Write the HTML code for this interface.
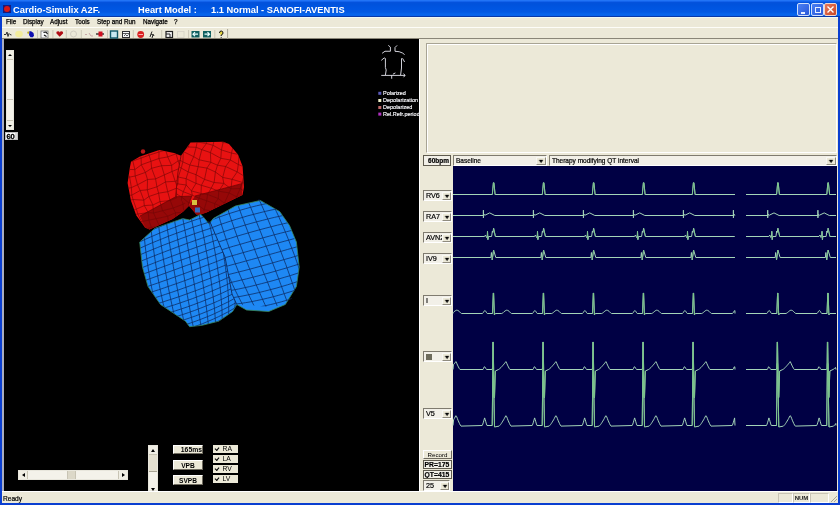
<!DOCTYPE html>
<html><head><meta charset="utf-8">
<style>
*{margin:0;padding:0;box-sizing:border-box}
html,body{width:840px;height:505px;overflow:hidden;background:#0a3ed0;font-family:"Liberation Sans",sans-serif;position:relative}
.a{position:absolute}
#title{left:0;top:0;width:840px;height:17px;background:linear-gradient(#2a7cf8 0px,#1a6cf4 1px,#0452dc 2.5px,#0052dc 4px,#0056e2 9px,#0258e2 12px,#0664ec 14px,#0662ea 15.5px,#0838a8 16.2px,#0838a8 17px)}
.tt{color:#fff;font-weight:bold;font-size:9.3px;top:5px;white-space:nowrap;line-height:10px}
#menu{left:2px;top:17px;width:836px;height:10px;background:#ece9d8;border-top:1px solid #eef8f4}
.mi{font-size:6.3px;top:0px;color:#000;white-space:nowrap;line-height:7px;-webkit-text-stroke:0.25px #000}
#tool{left:2px;top:27px;width:836px;height:12px;background:#ece9d8;border-top:1px solid #fdfdf8;border-bottom:1px solid #8a8678}
.sep{position:absolute;top:2px;width:1px;height:8px;background:#c8c4b4}
#left{left:4px;top:39px;width:415px;height:452px;background:#000}
#strip{left:2px;top:39px;width:2px;height:452px;background:#a8acc0}
#right{left:419px;top:39px;width:419px;height:452px;background:#ece9d8;border-left:1px solid #fff}
#status{left:2px;top:491px;width:836px;height:12px;background:#ece9d8;border-top:1px solid #fff}
#ecg{left:453px;top:166px;width:384px;height:325px;background:#000044}
.cb{background:#f2f0e8;border:1px solid #7f7b6f;border-right-color:#fff;border-bottom-color:#fff;color:#000;white-space:nowrap;overflow:hidden;-webkit-text-stroke:0.2px #000}
.dd{background:#ece9d8;border:1px solid #f8f8f4;border-right-color:#8f8b7f;border-bottom-color:#8f8b7f}
.tri{width:0;height:0;border-left:2.5px solid transparent;border-right:2.5px solid transparent;border-top:3px solid #000;transform:scale(1.1)}
body *{will-change:transform}
.btn{background:#ece9d8;border:1px solid #fff;border-right-color:#6f6b5f;border-bottom-color:#6f6b5f;color:#000;white-space:nowrap;overflow:hidden;text-align:center}
.lg{color:#f4f4fc;font-size:5.5px;line-height:6px;white-space:nowrap;-webkit-text-stroke:0.15px #fff}
.dot{width:2px;height:2px}
.ck{left:213px;width:25px;height:8px;background:#ece9d8;font-size:6.8px;line-height:8px;padding-left:9.5px;color:#000;position:absolute}
.ck::before{content:"";position:absolute;left:1.5px;top:1.5px;width:3px;height:2px;border-left:1px solid #000;border-bottom:1px solid #000;transform:rotate(-50deg)}
</style></head><body>
<div id="title" class="a">
  <div class="a" style="left:3px;top:5px;width:8px;height:8px;background:#1a1a7a"><div class="a" style="left:1px;top:1px;width:6px;height:6px;border-radius:3px;background:#d81818"></div></div>
  <div class="a tt" style="left:13px">Cardio-Simulix A2F.</div>
  <div class="a tt" style="left:138px">Heart Model :</div>
  <div class="a tt" style="left:211px">1.1 Normal - SANOFI-AVENTIS</div>
  <div class="a" style="left:797px;top:3px;width:13px;height:13px;border:1px solid #d0e0fc;border-radius:2px;background:linear-gradient(135deg,#4a80f4,#2a58d8)"><div class="a" style="left:3px;top:8px;width:4px;height:2px;background:#e8f0ff"></div></div>
  <div class="a" style="left:811px;top:3px;width:13px;height:13px;border:1px solid #d0e0fc;border-radius:2px;background:linear-gradient(135deg,#4a80f4,#2a58d8)"><div class="a" style="left:2.5px;top:2.5px;width:6px;height:6px;border:1px solid #e8f0ff;border-top-width:1.5px"></div></div>
  <div class="a" style="left:824px;top:3px;width:13px;height:13px;border:1px solid #f0d8d0;border-radius:2px;background:linear-gradient(135deg,#e87858,#c84828)"><svg class="a" style="left:0;top:0" width="11" height="11"><path d="M2.5,2.5 L8.5,8.5 M8.5,2.5 L2.5,8.5" stroke="#fff" stroke-width="1.4"/></svg></div>
</div>
<div id="menu" class="a">
  <div class="a mi" style="left:4px">File</div>
  <div class="a mi" style="left:21px">Display</div>
  <div class="a mi" style="left:47.5px">Adjust</div>
  <div class="a mi" style="left:73px">Tools</div>
  <div class="a mi" style="left:95px">Step and Run</div>
  <div class="a mi" style="left:140.5px">Navigate</div>
  <div class="a mi" style="left:172px">?</div>
</div>
<div id="tool" class="a">
  <svg class="a" style="left:-2px;top:-27px" width="240" height="40" viewBox="0 0 240 40">
    <path d="M4,33.5 L6,33.5 L7,31 L8,35.5 L9,32.5 L10,33.5 L11.5,34" stroke="#303030" stroke-width="1" fill="none"/>
    <ellipse cx="19" cy="33" rx="3.8" ry="3.2" fill="#f2ec9c"/>
    <circle cx="28.3" cy="31.7" r="1.1" fill="#c0b020"/>
    <path d="M29.5,30 L31.5,30.5 L33.5,32 L34,34.5 L33,36.3 L30.5,36.3 L29,34 Z" fill="#1010b0"/>
    <rect x="41" y="30" width="7" height="7" fill="#f8f8f8" stroke="#707070" stroke-width="0.8"/>
    <path d="M43.5,31.5 L46,31 L47.5,33 M44,34 L46.5,35.5" stroke="#101010" stroke-width="1.1" fill="none"/>
    <path d="M59.7,35.8 L56.3,32.3 Q56,30.2 58,30.2 Q59.5,30.2 59.7,31.5 Q60,30.2 61.5,30.2 Q63.3,30.2 63.2,32.3 Z" fill="#b00c14"/>
    <circle cx="73.5" cy="33" r="3" fill="none" stroke="#d0ccc0" stroke-width="1"/>
    <path d="M85,33.5 L87,33.5 M89,32 L91,35 M92,34 L92,36" stroke="#c8a8a8" stroke-width="1" fill="none"/>
    <path d="M96,33 L104,33" stroke="#101010" stroke-width="1.2"/>
    <rect x="98.5" y="30.5" width="4" height="5" fill="#d01020"/>
    <rect x="110.5" y="30" width="7" height="7" fill="#c8e8f0" stroke="#105868" stroke-width="1.4"/>
    <rect x="122.5" y="30.5" width="7" height="6" fill="#f8f8f8" stroke="#303030" stroke-width="1"/>
    <path d="M123,32.5 L129,32.5 M124,35 L125.5,33.5 L127,35 L128.5,33.5" stroke="#303030" stroke-width="0.8" fill="none"/>
    <circle cx="140.7" cy="33.5" r="3.4" fill="#d82020"/>
    <path d="M138.5,33.5 L143,33.5" stroke="#ffd0d0" stroke-width="0.8"/>
    <path d="M152,30.5 L151,33 L153,34 L152,37 M151,33 L150,36 M153,33 L154,35" stroke="#101010" stroke-width="0.9" fill="none"/>
    <rect x="166" y="30.5" width="6.5" height="6" fill="#f8f8f8" stroke="#202020" stroke-width="1.2"/>
    <path d="M166,33 L170,33 L170,36" stroke="#202020" stroke-width="1" fill="none"/>
    <rect x="177.5" y="30.5" width="6.5" height="6" fill="none" stroke="#d8d4c8" stroke-width="0.9"/>
    <rect x="191.5" y="30" width="8" height="6.5" fill="#106060"/>
    <path d="M193,33.2 L198,33.2 M195,31.2 L193,33.2 L195,35.2" stroke="#e8ffff" stroke-width="1.2" fill="none"/>
    <rect x="203" y="30" width="8" height="6.5" fill="#106060"/>
    <path d="M204.5,33.2 L209.5,33.2 M207.5,31.2 L209.5,33.2 L207.5,35.2" stroke="#e8ffff" stroke-width="1.2" fill="none"/>
    <path d="M219.5,32 Q219.5,30 221.2,30 Q223,30 223,32 Q223,33.5 221.2,34 L221.2,35 M221.2,36 L221.2,36.8" stroke="#101010" stroke-width="1" fill="#e8d840"/>
    <path d="M37.5,29 L37.5,37 M52.9,29 L52.9,37 M66.3,29 L66.3,37 M81.3,29 L81.3,37 M107.5,29 L107.5,37 M133.3,29 L133.3,37 M161.7,29 L161.7,37 M188.6,29 L188.6,37 M214.8,29 L214.8,37" stroke="#cbc7b6" stroke-width="1"/>
    <path d="M227.6,28 L227.6,38" stroke="#a8a494" stroke-width="1"/>
  </svg>
</div>
<div id="strip" class="a"></div>
<div id="left" class="a"></div>
<div id="right" class="a"></div>
<div id="ecg" class="a"></div>

<div class="a" style="left:6px;top:50px;width:8px;height:80px;background:#f4f2ea;border:1px solid #e8e6dc">
  <div class="a" style="left:0;top:0;width:6px;height:9px;background:#f0eee4;border-bottom:1px solid #c8c4b4"><div class="a" style="left:1px;top:3px;width:0;height:0;border-left:2px solid transparent;border-right:2px solid transparent;border-bottom:2.5px solid #000"></div></div>
  <div class="a" style="left:0;top:48px;width:6px;height:1px;background:#c8c4b4"></div>
  <div class="a" style="left:0;top:69px;width:6px;height:9px;background:#f0eee4;border-top:1px solid #c8c4b4"><div class="a" style="left:1px;top:4px;width:0;height:0;border-left:2px solid transparent;border-right:2px solid transparent;border-top:2.5px solid #000"></div></div>
</div>
<div class="a" style="left:5px;top:132px;width:13px;height:8px;background:linear-gradient(90deg,#fff 9px,#d8d8d8 9px,#d8d8d8 12px,#fff 12px);border:0.5px solid #c0c0c0;font-size:7.6px;line-height:8px;font-weight:bold;color:#000;padding-left:0.5px;-webkit-text-stroke:0.3px #000;letter-spacing:-0.3px">60</div>
<svg class="a" style="left:0;top:0" width="420" height="130" viewBox="0 0 420 130">
  <g stroke="#e8e8f0" stroke-width="0.9" fill="none">
    <path d="M388.3,45.4 L390.4,47.1 L390.4,51.25 L385,51.25 L382.1,53.3"/>
    <path d="M397.1,45.4 L395,47.5 L395,51.3 L399.2,51.7 L402.5,53 L404.6,54.6"/>
    <path d="M381.25,60.4 L384.2,57.9 L385.4,58.5 L385.4,67.5 L386.2,70 L385.4,75"/>
    <path d="M402.5,58.3 L404.6,62 M401.5,58.3 L401.5,68 L400.6,75"/>
    <path d="M381.25,75.4 L405,75.4 M403.6,73.6 L405,75.4 L403.6,77.2 M391.7,75.4 L391.7,78.75 M392.9,74.2 L395.4,72.9"/>
  </g>
  <rect x="378.3" y="91.8" width="3" height="3" fill="#5a5ab8"/>
  <rect x="378.3" y="99" width="3" height="3" fill="#f0f0c8"/>
  <rect x="378.3" y="106" width="3" height="3" fill="#c06868"/>
  <rect x="378.3" y="112.6" width="3" height="3" fill="#b030c0"/>
</svg>
<div class="a lg" style="left:382.5px;top:90px">Polarized</div>
<div class="a lg" style="left:382.5px;top:97px">Depolarization</div>
<div class="a lg" style="left:382.5px;top:104px">Depolarized</div>
<div class="a" style="left:382.5px;top:111px;width:36.5px;overflow:hidden"><div class="lg">Rel.Refr.period</div></div>

<div class="a" style="left:18px;top:470px;width:110px;height:10px;background:#f4f2ea;border:1px solid #e8e6dc">
  <div class="a" style="left:0;top:0;width:9px;height:8px;background:#f0eee4;border-right:1px solid #c8c4b4"><div class="a" style="left:3px;top:1.5px;width:0;height:0;border-top:2.5px solid transparent;border-bottom:2.5px solid transparent;border-right:3px solid #000"></div></div>
  <div class="a" style="left:48px;top:0;width:9px;height:8px;background:#dcd8c8;border-left:1px solid #c8c4b4;border-right:1px solid #c8c4b4"></div>
  <div class="a" style="right:0;top:0;width:9px;height:8px;background:#f0eee4;border-left:1px solid #c8c4b4"><div class="a" style="left:3px;top:1.5px;width:0;height:0;border-top:2.5px solid transparent;border-bottom:2.5px solid transparent;border-left:3px solid #000"></div></div>
</div>
<div class="a" style="left:148px;top:445px;width:10px;height:46px;background:#f4f2ea;border:1px solid #e8e6dc">
  <div class="a" style="left:0;top:0;width:8px;height:9px;background:#f0eee4;border-bottom:1px solid #c8c4b4"><div class="a" style="left:1.5px;top:3px;width:0;height:0;border-left:2.5px solid transparent;border-right:2.5px solid transparent;border-bottom:3px solid #000"></div></div>
  <div class="a" style="left:0;top:9px;width:8px;height:17px;background:#e4e0d0;border-bottom:1px solid #a8a494"></div>
  <div class="a" style="left:1.5px;top:42px;width:0;height:0;border-left:2.5px solid transparent;border-right:2.5px solid transparent;border-top:3px solid #000"></div>
</div>
<div class="a btn" style="left:173px;top:445px;width:30px;height:9px;font-size:6.8px;line-height:8px;font-weight:bold;text-align:right;padding-right:0">165ms</div>
<div class="a btn" style="left:173px;top:460px;width:30px;height:10px;font-size:6.6px;line-height:9px;font-weight:bold">VPB</div>
<div class="a btn" style="left:173px;top:475px;width:30px;height:10px;font-size:6.6px;line-height:9px;font-weight:bold">SVPB</div>
<div class="a ck" style="top:445px">RA</div>
<div class="a ck" style="top:455px">LA</div>
<div class="a ck" style="top:465px">RV</div>
<div class="a ck" style="top:475px">LV</div>
<svg class="a" style="left:0;top:0" width="840" height="505" viewBox="0 0 840 505">
<defs><clipPath id="cb"><polygon points="200.7,214.4 189.6,220.0 182.7,218.6 155.0,228.3 139.7,242.1 142.5,267.1 148.0,286.5 160.5,304.5 185.5,321.2 189.6,326.7 202.0,325.3 218.7,321.2 232.6,311.5 236.8,304.5 246.5,310.0 268.7,311.5 285.3,304.5 296.4,286.5 299.2,267.1 296.4,242.1 289.5,225.5 279.7,211.6 260.3,200.5 235.4,206.0 213.2,218.6 209.0,224.1 203.5,217.2"/></clipPath><clipPath id="clv"><polygon points="200.7,214.4 189.6,220.0 182.7,218.6 155.0,228.3 139.7,242.1 142.5,267.1 148.0,286.5 160.5,304.5 185.5,321.2 189.6,326.7 202.0,325.3 218.7,321.2 232.6,311.5 236.8,304.5 232.0,294.0 225.0,257.0 210.0,222.0 203.5,217.2"/></clipPath><clipPath id="crv"><polygon points="210.0,222.0 225.0,211.0 259.0,199.0 279.7,211.6 289.5,225.5 296.4,244.5 299.2,267.1 296.4,286.5 291.6,299.0 274.0,307.6 249.5,305.0 236.8,304.5 232.0,294.0 225.0,257.0"/></clipPath><clipPath id="crl"><polygon points="110,130 183,130 181,155.7 178,172 175.6,196.8 189,205.7 172.6,219.1 110,250"/></clipPath><clipPath id="crr"><polygon points="183,130 260,130 260,230 189,205.7 175.6,196.8 178,172 181,155.7"/></clipPath><clipPath id="cr"><polygon points="131.0,161.8 139.9,156.6 159.2,149.9 174.1,152.9 181.0,155.7 190.5,142.5 223.2,141.7 229.0,144.0 238.0,154.4 242.6,166.3 244.0,187.0 242.5,195.0 222.4,204.7 207.0,212.3 200.6,214.5 196.4,214.6 189.0,205.7 183.0,211.7 172.6,219.1 149.5,229.5 145.0,227.6 136.3,215.6 130.9,200.4 127.6,183.0 129.8,167.7"/></clipPath></defs>
<polygon points="131.0,161.8 139.9,156.6 159.2,149.9 174.1,152.9 181.0,155.7 190.5,142.5 223.2,141.7 229.0,144.0 238.0,154.4 242.6,166.3 244.0,187.0 242.5,195.0 222.4,204.7 207.0,212.3 200.6,214.5 196.4,214.6 189.0,205.7 183.0,211.7 172.6,219.1 149.5,229.5 145.0,227.6 136.3,215.6 130.9,200.4 127.6,183.0 129.8,167.7" fill="#e81212"/>
<polygon points="139.9,216.1 175.6,196.8 192.0,196.0 189.0,205.7 183.0,211.7 172.6,219.1 149.5,229.5 145.0,227.6" fill="#960808"/><polygon points="195.0,196.0 242.6,183.4 242.0,195.0 222.4,204.7 207.0,212.3 200.6,214.5 196.4,214.6 189.0,205.7" fill="#960808"/>
<g clip-path="url(#cr)"><path d="M111.8,157.9 L115.3,154.5 L120.3,148.9 L123.3,148.0 L130.2,142.4 L139.5,140.0 L146.2,137.1 L153.1,133.4 L160.7,133.8 L167.9,131.7 L175.8,128.1 L182.9,129.5 L187.5,127.6 L194.8,129.9 L198.7,132.8 M112.4,163.7 L114.5,159.8 L119.2,156.8 L126.3,150.4 L130.0,147.4 L140.1,145.0 L146.5,141.5 L154.0,139.2 L161.4,137.6 L170.2,136.9 L178.2,135.7 L185.9,135.1 L191.7,131.9 L197.9,135.2 L202.6,134.7 M111.7,166.3 L115.7,164.4 L118.6,159.3 L126.5,159.3 L130.4,155.4 L139.0,149.8 L146.6,149.1 L156.9,143.7 L164.3,141.3 L172.9,140.4 L181.4,141.1 L187.4,140.1 L193.3,136.3 L200.0,136.1 L203.3,138.1 M111.1,171.8 L113.0,171.5 L119.1,168.7 L127.3,163.5 L132.8,160.9 L141.1,158.1 L149.1,155.2 L159.0,152.0 L165.7,150.2 L173.5,146.5 L184.2,145.5 L190.2,142.4 L196.5,143.5 L200.9,143.3 L207.9,141.5 M111.5,179.0 L115.8,176.1 L121.3,174.7 L125.2,169.3 L134.8,169.6 L141.3,164.8 L151.0,161.3 L158.9,158.5 L167.7,156.9 L176.1,153.8 L186.0,150.5 L193.0,151.4 L198.9,148.4 L206.6,147.7 L209.2,148.2 M112.5,184.2 L115.6,182.8 L123.0,180.7 L129.6,177.1 L135.2,176.0 L145.4,172.4 L151.6,168.3 L161.6,165.7 L171.6,165.4 L178.1,160.9 L188.6,160.0 L196.4,157.0 L200.9,155.3 L209.2,154.1 L212.4,154.0 M112.8,191.9 L119.1,189.1 L121.5,189.8 L131.4,187.6 L137.5,184.8 L147.5,179.5 L155.6,178.9 L164.3,174.9 L172.0,171.5 L180.6,167.9 L190.3,166.3 L198.8,163.3 L206.1,163.8 L212.0,163.1 L216.7,160.9 M112.9,199.8 L118.2,196.7 L125.8,195.7 L131.8,195.1 L140.2,190.5 L147.3,189.8 L156.9,186.8 L165.5,181.9 L175.2,181.3 L182.7,178.5 L193.7,176.0 L201.1,170.7 L207.2,171.7 L211.0,167.8 L216.5,167.2 M116.4,205.3 L122.5,202.6 L125.8,201.6 L133.0,199.5 L143.8,200.2 L148.9,196.5 L158.6,193.2 L167.7,191.7 L177.6,187.8 L184.9,184.9 L193.0,183.0 L202.7,179.7 L207.2,176.6 L213.9,176.0 L220.0,173.3 M120.2,212.1 L123.6,210.6 L129.8,210.7 L136.4,209.1 L144.3,205.6 L152.9,205.0 L160.0,201.6 L170.2,200.5 L181.0,195.9 L189.5,194.5 L195.3,190.4 L202.3,188.9 L210.8,186.5 L216.9,183.2 L221.0,180.6 M120.3,217.9 L124.7,216.1 L133.4,215.0 L137.8,214.0 L148.3,212.6 L153.5,213.0 L162.5,210.7 L173.2,208.0 L183.0,204.3 L190.9,199.4 L198.8,198.1 L205.8,193.7 L212.4,193.7 L215.2,188.8 L221.2,188.0 M123.6,221.7 L128.4,223.5 L136.1,222.4 L141.5,221.5 L148.9,220.2 L156.1,218.7 L167.7,216.2 L175.5,212.8 L183.8,212.2 L192.0,208.3 L199.0,205.7 L207.6,200.8 L210.8,199.8 L218.9,195.9 L221.1,193.8 M126.5,226.7 L131.2,228.5 L137.4,227.3 L145.3,229.3 L151.3,227.3 L159.6,226.3 L168.4,222.2 L175.4,218.9 L184.6,217.5 L191.5,214.4 L199.4,212.7 L205.5,210.2 L212.6,205.5 L217.3,203.1 L222.3,198.9 M130.8,232.3 L136.7,232.2 L141.8,234.6 L147.2,231.7 L153.5,232.7 L162.7,232.2 L171.3,227.8 L176.9,225.6 L184.9,224.5 L194.9,222.2 L199.8,218.9 L206.4,213.9 L213.4,209.2 L215.6,208.4 L219.7,203.3 M134.4,235.2 L136.7,235.4 L143.6,236.6 L149.0,237.1 L158.5,235.9 L164.3,233.8 L170.9,234.1 L178.0,232.8 L188.5,227.4 L195.8,225.4 L201.9,223.6 L206.2,219.8 L212.7,216.7 L215.4,212.8 L220.9,208.9 M111.8,157.9 L112.4,163.7 L111.7,166.3 L111.1,171.8 L111.5,179.0 L112.5,184.2 L112.8,191.9 L112.9,199.8 L116.4,205.3 L120.2,212.1 L120.3,217.9 L123.6,221.7 L126.5,226.7 L130.8,232.3 L134.4,235.2 M115.3,154.5 L114.5,159.8 L115.7,164.4 L113.0,171.5 L115.8,176.1 L115.6,182.8 L119.1,189.1 L118.2,196.7 L122.5,202.6 L123.6,210.6 L124.7,216.1 L128.4,223.5 L131.2,228.5 L136.7,232.2 L136.7,235.4 M120.3,148.9 L119.2,156.8 L118.6,159.3 L119.1,168.7 L121.3,174.7 L123.0,180.7 L121.5,189.8 L125.8,195.7 L125.8,201.6 L129.8,210.7 L133.4,215.0 L136.1,222.4 L137.4,227.3 L141.8,234.6 L143.6,236.6 M123.3,148.0 L126.3,150.4 L126.5,159.3 L127.3,163.5 L125.2,169.3 L129.6,177.1 L131.4,187.6 L131.8,195.1 L133.0,199.5 L136.4,209.1 L137.8,214.0 L141.5,221.5 L145.3,229.3 L147.2,231.7 L149.0,237.1 M130.2,142.4 L130.0,147.4 L130.4,155.4 L132.8,160.9 L134.8,169.6 L135.2,176.0 L137.5,184.8 L140.2,190.5 L143.8,200.2 L144.3,205.6 L148.3,212.6 L148.9,220.2 L151.3,227.3 L153.5,232.7 L158.5,235.9 M139.5,140.0 L140.1,145.0 L139.0,149.8 L141.1,158.1 L141.3,164.8 L145.4,172.4 L147.5,179.5 L147.3,189.8 L148.9,196.5 L152.9,205.0 L153.5,213.0 L156.1,218.7 L159.6,226.3 L162.7,232.2 L164.3,233.8 M146.2,137.1 L146.5,141.5 L146.6,149.1 L149.1,155.2 L151.0,161.3 L151.6,168.3 L155.6,178.9 L156.9,186.8 L158.6,193.2 L160.0,201.6 L162.5,210.7 L167.7,216.2 L168.4,222.2 L171.3,227.8 L170.9,234.1 M153.1,133.4 L154.0,139.2 L156.9,143.7 L159.0,152.0 L158.9,158.5 L161.6,165.7 L164.3,174.9 L165.5,181.9 L167.7,191.7 L170.2,200.5 L173.2,208.0 L175.5,212.8 L175.4,218.9 L176.9,225.6 L178.0,232.8 M160.7,133.8 L161.4,137.6 L164.3,141.3 L165.7,150.2 L167.7,156.9 L171.6,165.4 L172.0,171.5 L175.2,181.3 L177.6,187.8 L181.0,195.9 L183.0,204.3 L183.8,212.2 L184.6,217.5 L184.9,224.5 L188.5,227.4 M167.9,131.7 L170.2,136.9 L172.9,140.4 L173.5,146.5 L176.1,153.8 L178.1,160.9 L180.6,167.9 L182.7,178.5 L184.9,184.9 L189.5,194.5 L190.9,199.4 L192.0,208.3 L191.5,214.4 L194.9,222.2 L195.8,225.4 M175.8,128.1 L178.2,135.7 L181.4,141.1 L184.2,145.5 L186.0,150.5 L188.6,160.0 L190.3,166.3 L193.7,176.0 L193.0,183.0 L195.3,190.4 L198.8,198.1 L199.0,205.7 L199.4,212.7 L199.8,218.9 L201.9,223.6 M182.9,129.5 L185.9,135.1 L187.4,140.1 L190.2,142.4 L193.0,151.4 L196.4,157.0 L198.8,163.3 L201.1,170.7 L202.7,179.7 L202.3,188.9 L205.8,193.7 L207.6,200.8 L205.5,210.2 L206.4,213.9 L206.2,219.8 M187.5,127.6 L191.7,131.9 L193.3,136.3 L196.5,143.5 L198.9,148.4 L200.9,155.3 L206.1,163.8 L207.2,171.7 L207.2,176.6 L210.8,186.5 L212.4,193.7 L210.8,199.8 L212.6,205.5 L213.4,209.2 L212.7,216.7 M194.8,129.9 L197.9,135.2 L200.0,136.1 L200.9,143.3 L206.6,147.7 L209.2,154.1 L212.0,163.1 L211.0,167.8 L213.9,176.0 L216.9,183.2 L215.2,188.8 L218.9,195.9 L217.3,203.1 L215.6,208.4 L215.4,212.8 M198.7,132.8 L202.6,134.7 L203.3,138.1 L207.9,141.5 L209.2,148.2 L212.4,154.0 L216.7,160.9 L216.5,167.2 L220.0,173.3 L221.0,180.6 L221.2,188.0 L221.1,193.8 L222.3,198.9 L219.7,203.3 L220.9,208.9" stroke="#700606" stroke-width="0.6" fill="none" clip-path="url(#crl)"/><path d="M186.5,110.1 L192.0,108.7 L196.9,109.2 L201.3,109.9 L207.9,110.5 L215.2,110.7 L224.0,115.4 L230.5,115.7 L239.7,121.3 L246.7,122.6 L254.7,124.9 L260.2,129.6 L262.6,132.8 L267.3,139.3 L269.7,142.2 M184.4,113.9 L188.5,112.0 L192.3,112.4 L200.8,113.7 L206.5,115.4 L214.5,116.0 L223.6,119.7 L229.5,121.9 L238.3,126.1 L246.5,127.3 L254.4,130.3 L258.6,136.3 L263.1,139.1 L267.1,143.5 L272.9,146.8 M182.0,117.5 L186.0,118.1 L191.2,117.9 L198.7,120.5 L204.6,120.9 L210.9,123.0 L221.1,126.4 L229.9,126.7 L236.5,131.2 L243.0,133.9 L250.8,136.2 L257.0,142.1 L263.0,143.9 L268.6,149.7 L271.1,151.5 M177.8,124.2 L183.4,124.1 L187.3,123.1 L194.2,126.0 L203.8,125.1 L208.9,127.5 L217.5,131.0 L227.2,133.2 L233.5,137.0 L242.9,140.9 L252.6,144.8 L257.9,148.1 L264.5,149.5 L270.3,155.4 L274.0,158.6 M174.3,127.7 L178.0,129.0 L183.7,127.9 L191.0,129.8 L199.0,131.4 L205.9,134.1 L214.7,137.7 L223.1,142.6 L233.8,143.2 L240.8,147.3 L249.1,149.9 L258.0,156.4 L262.9,157.8 L266.7,159.4 L271.7,162.8 M173.2,132.6 L175.0,136.3 L182.7,134.8 L189.6,136.2 L197.1,141.9 L206.5,143.5 L213.0,145.3 L221.4,149.9 L231.5,153.1 L239.2,154.5 L249.0,160.5 L256.5,163.0 L262.8,165.8 L266.2,167.8 L270.9,168.4 M167.9,139.3 L173.4,142.0 L181.8,142.9 L188.5,147.0 L196.2,147.3 L201.8,149.6 L210.4,152.6 L220.8,158.3 L230.4,160.0 L238.3,164.5 L244.4,167.1 L254.9,170.5 L261.0,172.2 L264.5,175.7 L269.5,177.9 M169.3,146.2 L171.8,149.9 L178.7,149.2 L183.3,151.6 L193.7,156.7 L199.2,159.8 L210.8,162.3 L217.5,165.2 L225.6,166.5 L237.2,171.9 L243.9,176.0 L251.1,178.5 L259.3,178.6 L263.0,181.0 L267.5,183.7 M165.0,152.9 L169.0,156.8 L175.4,157.6 L182.9,161.9 L189.8,165.0 L198.2,166.7 L206.9,168.1 L215.4,172.0 L222.7,177.4 L232.0,179.3 L242.3,182.4 L248.4,184.8 L256.1,187.9 L260.3,188.9 L265.5,189.1 M165.5,159.9 L169.1,163.2 L175.8,164.8 L181.2,168.1 L188.2,171.9 L196.0,174.7 L204.5,179.4 L214.1,182.5 L223.8,183.4 L231.0,188.8 L240.2,188.5 L245.2,191.9 L251.9,193.0 L257.7,195.9 L265.0,197.6 M162.5,167.1 L168.4,167.8 L174.4,173.8 L178.3,177.0 L186.1,178.7 L196.0,183.4 L201.4,185.3 L211.2,188.2 L218.7,191.2 L229.1,192.9 L236.6,196.8 L242.2,198.4 L251.2,200.6 L255.0,203.3 L262.3,203.7 M161.9,171.7 L165.5,176.6 L171.3,177.6 L177.9,183.9 L186.2,185.0 L191.4,190.9 L201.0,193.5 L207.6,194.4 L218.3,198.6 L224.4,203.1 L234.3,204.8 L239.8,206.7 L246.4,207.9 L253.5,206.6 L258.6,208.8 M162.6,176.9 L167.1,180.7 L170.3,184.0 L175.8,187.7 L183.3,191.7 L192.3,195.2 L199.1,198.2 L206.7,200.8 L214.6,203.6 L224.4,207.9 L230.2,209.6 L240.1,209.7 L246.2,211.7 L250.7,213.4 L255.0,211.8 M164.7,185.2 L166.7,188.3 L172.4,191.3 L176.7,194.1 L181.7,197.0 L188.7,202.8 L196.9,204.1 L204.1,209.6 L214.8,211.6 L220.5,212.3 L228.1,214.8 L234.6,215.9 L241.3,218.2 L249.3,216.6 L251.2,217.3 M164.5,187.5 L166.3,191.5 L172.0,195.8 L176.0,199.7 L181.2,202.6 L188.1,206.6 L195.1,208.6 L203.5,212.3 L212.0,215.9 L220.1,218.4 L227.2,220.6 L232.7,219.5 L241.0,219.0 L245.3,220.3 L247.2,219.8 M186.5,110.1 L184.4,113.9 L182.0,117.5 L177.8,124.2 L174.3,127.7 L173.2,132.6 L167.9,139.3 L169.3,146.2 L165.0,152.9 L165.5,159.9 L162.5,167.1 L161.9,171.7 L162.6,176.9 L164.7,185.2 L164.5,187.5 M192.0,108.7 L188.5,112.0 L186.0,118.1 L183.4,124.1 L178.0,129.0 L175.0,136.3 L173.4,142.0 L171.8,149.9 L169.0,156.8 L169.1,163.2 L168.4,167.8 L165.5,176.6 L167.1,180.7 L166.7,188.3 L166.3,191.5 M196.9,109.2 L192.3,112.4 L191.2,117.9 L187.3,123.1 L183.7,127.9 L182.7,134.8 L181.8,142.9 L178.7,149.2 L175.4,157.6 L175.8,164.8 L174.4,173.8 L171.3,177.6 L170.3,184.0 L172.4,191.3 L172.0,195.8 M201.3,109.9 L200.8,113.7 L198.7,120.5 L194.2,126.0 L191.0,129.8 L189.6,136.2 L188.5,147.0 L183.3,151.6 L182.9,161.9 L181.2,168.1 L178.3,177.0 L177.9,183.9 L175.8,187.7 L176.7,194.1 L176.0,199.7 M207.9,110.5 L206.5,115.4 L204.6,120.9 L203.8,125.1 L199.0,131.4 L197.1,141.9 L196.2,147.3 L193.7,156.7 L189.8,165.0 L188.2,171.9 L186.1,178.7 L186.2,185.0 L183.3,191.7 L181.7,197.0 L181.2,202.6 M215.2,110.7 L214.5,116.0 L210.9,123.0 L208.9,127.5 L205.9,134.1 L206.5,143.5 L201.8,149.6 L199.2,159.8 L198.2,166.7 L196.0,174.7 L196.0,183.4 L191.4,190.9 L192.3,195.2 L188.7,202.8 L188.1,206.6 M224.0,115.4 L223.6,119.7 L221.1,126.4 L217.5,131.0 L214.7,137.7 L213.0,145.3 L210.4,152.6 L210.8,162.3 L206.9,168.1 L204.5,179.4 L201.4,185.3 L201.0,193.5 L199.1,198.2 L196.9,204.1 L195.1,208.6 M230.5,115.7 L229.5,121.9 L229.9,126.7 L227.2,133.2 L223.1,142.6 L221.4,149.9 L220.8,158.3 L217.5,165.2 L215.4,172.0 L214.1,182.5 L211.2,188.2 L207.6,194.4 L206.7,200.8 L204.1,209.6 L203.5,212.3 M239.7,121.3 L238.3,126.1 L236.5,131.2 L233.5,137.0 L233.8,143.2 L231.5,153.1 L230.4,160.0 L225.6,166.5 L222.7,177.4 L223.8,183.4 L218.7,191.2 L218.3,198.6 L214.6,203.6 L214.8,211.6 L212.0,215.9 M246.7,122.6 L246.5,127.3 L243.0,133.9 L242.9,140.9 L240.8,147.3 L239.2,154.5 L238.3,164.5 L237.2,171.9 L232.0,179.3 L231.0,188.8 L229.1,192.9 L224.4,203.1 L224.4,207.9 L220.5,212.3 L220.1,218.4 M254.7,124.9 L254.4,130.3 L250.8,136.2 L252.6,144.8 L249.1,149.9 L249.0,160.5 L244.4,167.1 L243.9,176.0 L242.3,182.4 L240.2,188.5 L236.6,196.8 L234.3,204.8 L230.2,209.6 L228.1,214.8 L227.2,220.6 M260.2,129.6 L258.6,136.3 L257.0,142.1 L257.9,148.1 L258.0,156.4 L256.5,163.0 L254.9,170.5 L251.1,178.5 L248.4,184.8 L245.2,191.9 L242.2,198.4 L239.8,206.7 L240.1,209.7 L234.6,215.9 L232.7,219.5 M262.6,132.8 L263.1,139.1 L263.0,143.9 L264.5,149.5 L262.9,157.8 L262.8,165.8 L261.0,172.2 L259.3,178.6 L256.1,187.9 L251.9,193.0 L251.2,200.6 L246.4,207.9 L246.2,211.7 L241.3,218.2 L241.0,219.0 M267.3,139.3 L267.1,143.5 L268.6,149.7 L270.3,155.4 L266.7,159.4 L266.2,167.8 L264.5,175.7 L263.0,181.0 L260.3,188.9 L257.7,195.9 L255.0,203.3 L253.5,206.6 L250.7,213.4 L249.3,216.6 L245.3,220.3 M269.7,142.2 L272.9,146.8 L271.1,151.5 L274.0,158.6 L271.7,162.8 L270.9,168.4 L269.5,177.9 L267.5,183.7 L265.5,189.1 L265.0,197.6 L262.3,203.7 L258.6,208.8 L255.0,211.8 L251.2,217.3 L247.2,219.8" stroke="#700606" stroke-width="0.6" fill="none" clip-path="url(#crr)"/><path d="M140,216 L175.6,196.8 L192,196 M195,196 L242.6,183.4" stroke="#6a0404" stroke-width="0.7" fill="none"/></g>
<path d="M181,155.7 L178,172 L175.6,196.8" stroke="#700404" stroke-width="0.8" fill="none"/><circle cx="143" cy="151.5" r="2.2" fill="#b81818"/>
<rect x="192" y="200" width="5" height="5" fill="#d8c040"/>
<rect x="195" y="207.5" width="5" height="5" fill="#3a68b8"/>
<polygon points="200.7,214.4 189.6,220.0 182.7,218.6 155.0,228.3 139.7,242.1 142.5,267.1 148.0,286.5 160.5,304.5 185.5,321.2 189.6,326.7 202.0,325.3 218.7,321.2 232.6,311.5 236.8,304.5 246.5,310.0 268.7,311.5 285.3,304.5 296.4,286.5 299.2,267.1 296.4,242.1 289.5,225.5 279.7,211.6 260.3,200.5 235.4,206.0 213.2,218.6 209.0,224.1 203.5,217.2" fill="#1e88f4" stroke="#3a8a5a" stroke-width="0.8"/>
<path d="M114.9,231.8 L115.9,229.7 L117.1,227.5 L118.3,225.2 L119.7,222.8 L121.2,220.2 L122.9,217.6 L124.8,214.8 L126.9,211.9 L129.3,209.0 L132.0,206.1 L135.0,203.2 L138.3,200.4 L141.9,197.7 L145.7,195.0 L149.7,192.5 L154.0,190.1 L158.4,187.8 L162.9,185.6 L167.5,183.6 L172.2,181.8 L176.9,180.2 L181.6,178.8 L186.3,177.6 L190.9,176.6 L195.4,175.8 L199.8,175.3 L204.0,175.0 L208.1,174.9 L211.9,175.1 L215.5,175.6 L218.8,176.3 L221.8,177.3 L224.6,178.4 L227.2,179.5 L229.5,180.7 L231.7,181.9 L233.7,183.0 L235.6,184.2 L237.3,185.4 L238.9,186.6 M113.7,234.5 L114.6,232.4 L115.7,230.2 L116.9,227.9 L118.2,225.4 L119.6,222.8 L121.3,220.1 L123.1,217.3 L125.3,214.4 L127.8,211.5 L130.6,208.6 L133.8,205.7 L137.3,202.9 L141.0,200.2 L145.0,197.5 L149.2,195.0 L153.6,192.5 L158.2,190.2 L162.9,188.0 L167.7,186.0 L172.6,184.1 L177.5,182.4 L182.3,180.9 L187.2,179.6 L192.0,178.5 L196.7,177.7 L201.2,177.0 L205.6,176.6 L209.8,176.4 L213.8,176.5 L217.5,176.9 L220.9,177.4 L224.1,178.3 L226.9,179.4 L229.5,180.6 L231.8,181.9 L233.9,183.2 L235.9,184.4 L237.7,185.7 L239.3,186.9 L240.8,188.1 M112.5,237.4 L113.3,235.3 L114.3,233.1 L115.4,230.8 L116.6,228.3 L118.0,225.7 L119.6,222.9 L121.5,220.1 L123.7,217.2 L126.4,214.4 L129.4,211.5 L132.7,208.7 L136.4,205.9 L140.3,203.2 L144.4,200.5 L148.8,198.0 L153.4,195.5 L158.2,193.1 L163.0,190.9 L168.0,188.8 L173.0,186.9 L178.1,185.1 L183.2,183.6 L188.2,182.2 L193.1,181.0 L198.0,180.0 L202.7,179.3 L207.2,178.8 L211.6,178.5 L215.7,178.4 L219.5,178.6 L223.1,179.1 L226.4,179.8 L229.3,180.7 L231.9,182.0 L234.2,183.3 L236.2,184.7 L238.1,186.0 L239.8,187.3 L241.4,188.6 L242.8,189.8 M111.3,240.5 L112.1,238.4 L112.9,236.3 L113.9,233.9 L115.1,231.5 L116.4,228.8 L118.0,226.1 L120.0,223.3 L122.4,220.5 L125.2,217.7 L128.3,214.9 L131.8,212.1 L135.6,209.4 L139.7,206.7 L144.0,204.0 L148.6,201.5 L153.3,199.0 L158.2,196.6 L163.3,194.3 L168.4,192.2 L173.6,190.2 L178.8,188.4 L184.1,186.7 L189.2,185.3 L194.4,184.0 L199.3,182.9 L204.2,182.1 L208.9,181.4 L213.3,181.0 L217.6,180.8 L221.5,180.9 L225.2,181.2 L228.6,181.8 L231.6,182.6 L234.3,183.6 L236.6,184.9 L238.6,186.4 L240.4,187.8 L242.0,189.1 L243.5,190.4 L244.9,191.7 M110.2,243.7 L110.8,241.7 L111.6,239.6 L112.5,237.3 L113.5,234.9 L114.8,232.3 L116.6,229.7 L118.7,227.0 L121.3,224.3 L124.2,221.5 L127.5,218.8 L131.1,216.0 L135.0,213.3 L139.3,210.6 L143.7,208.0 L148.4,205.4 L153.4,202.9 L158.4,200.5 L163.6,198.2 L168.9,196.0 L174.3,194.0 L179.7,192.1 L185.0,190.4 L190.4,188.8 L195.6,187.5 L200.7,186.3 L205.7,185.3 L210.5,184.6 L215.1,184.1 L219.5,183.8 L223.6,183.7 L227.4,183.9 L230.8,184.3 L233.9,184.9 L236.7,185.8 L239.1,186.9 L241.1,188.3 L242.8,189.8 L244.3,191.2 L245.7,192.5 L246.9,193.8 M109.1,247.1 L109.7,245.2 L110.3,243.2 L111.1,240.9 L112.1,238.6 L113.5,236.1 L115.4,233.6 L117.6,231.0 L120.3,228.3 L123.4,225.7 L126.8,223.0 L130.5,220.3 L134.6,217.6 L139.0,215.0 L143.6,212.3 L148.5,209.8 L153.5,207.3 L158.7,204.9 L164.1,202.6 L169.5,200.3 L175.0,198.3 L180.5,196.3 L186.0,194.5 L191.5,192.9 L196.9,191.4 L202.2,190.2 L207.3,189.1 L212.2,188.2 L216.9,187.6 L221.4,187.1 L225.6,186.9 L229.4,186.9 L233.0,187.2 L236.2,187.7 L239.0,188.4 L241.5,189.4 L243.5,190.6 L245.2,192.0 L246.6,193.4 L247.8,194.8 L249.0,196.1 M108.1,250.7 L108.6,248.9 L109.1,246.9 L109.8,244.8 L110.9,242.6 L112.4,240.2 L114.4,237.8 L116.7,235.3 L119.5,232.8 L122.7,230.2 L126.2,227.6 L130.1,224.9 L134.3,222.3 L138.8,219.7 L143.6,217.1 L148.6,214.6 L153.8,212.1 L159.1,209.6 L164.6,207.3 L170.2,205.1 L175.8,203.0 L181.5,201.0 L187.1,199.1 L192.7,197.4 L198.2,195.8 L203.6,194.5 L208.8,193.3 L213.9,192.3 L218.7,191.5 L223.2,191.0 L227.5,190.6 L231.5,190.5 L235.1,190.6 L238.4,190.9 L241.3,191.5 L243.8,192.2 L245.9,193.3 L247.6,194.5 L248.9,195.9 L250.0,197.3 L251.0,198.6 M107.2,254.5 L107.6,252.8 L108.0,251.0 L108.7,248.9 L109.9,246.8 L111.5,244.6 L113.6,242.3 L116.0,240.0 L118.9,237.5 L122.2,235.0 L125.9,232.5 L129.9,229.9 L134.2,227.4 L138.8,224.8 L143.7,222.2 L148.8,219.7 L154.2,217.2 L159.6,214.8 L165.2,212.5 L170.9,210.2 L176.7,208.0 L182.5,206.0 L188.2,204.1 L193.9,202.3 L199.5,200.7 L205.0,199.2 L210.4,197.9 L215.5,196.8 L220.4,195.9 L225.1,195.2 L229.4,194.7 L233.5,194.4 L237.2,194.4 L240.5,194.5 L243.5,194.9 L246.0,195.5 L248.2,196.4 L249.9,197.4 L251.1,198.7 L252.2,200.0 L253.1,201.3 M106.4,258.5 L106.7,256.9 L107.1,255.2 L107.9,253.3 L109.1,251.4 L110.8,249.3 L113.0,247.1 L115.5,244.9 L118.5,242.6 L121.9,240.2 L125.7,237.7 L129.8,235.2 L134.3,232.7 L139.0,230.2 L144.0,227.7 L149.2,225.2 L154.6,222.7 L160.2,220.3 L166.0,218.0 L171.8,215.7 L177.6,213.5 L183.5,211.4 L189.4,209.4 L195.2,207.6 L200.9,205.9 L206.5,204.3 L211.9,202.9 L217.1,201.7 L222.1,200.7 L226.8,199.8 L231.3,199.2 L235.4,198.7 L239.2,198.5 L242.6,198.5 L245.6,198.7 L248.2,199.2 L250.3,199.8 L252.1,200.7 L253.4,201.8 L254.3,203.0 L255.0,204.2 M105.8,262.6 L106.0,261.2 L106.4,259.6 L107.2,257.9 L108.5,256.1 L110.3,254.2 L112.6,252.2 L115.2,250.0 L118.3,247.8 L121.8,245.6 L125.7,243.2 L129.9,240.8 L134.5,238.4 L139.3,235.9 L144.4,233.5 L149.7,231.0 L155.2,228.6 L160.9,226.2 L166.8,223.8 L172.7,221.5 L178.6,219.3 L184.6,217.1 L190.6,215.1 L196.5,213.2 L202.3,211.4 L207.9,209.8 L213.4,208.3 L218.7,206.9 L223.8,205.8 L228.6,204.8 L233.1,204.0 L237.2,203.4 L241.1,203.0 L244.5,202.9 L247.5,202.9 L250.2,203.1 L252.4,203.6 L254.1,204.3 L255.4,205.2 L256.3,206.3 L256.9,207.4 M105.3,266.8 L105.4,265.6 L105.9,264.2 L106.8,262.7 L108.2,261.0 L110.1,259.3 L112.4,257.4 L115.1,255.4 L118.3,253.3 L121.9,251.2 L125.9,248.9 L130.2,246.6 L134.8,244.3 L139.7,241.9 L144.9,239.5 L150.3,237.1 L155.9,234.7 L161.7,232.3 L167.6,229.9 L173.6,227.6 L179.7,225.3 L185.7,223.2 L191.8,221.1 L197.7,219.1 L203.6,217.3 L209.4,215.5 L214.9,213.9 L220.3,212.5 L225.4,211.2 L230.2,210.1 L234.8,209.2 L239.0,208.4 L242.9,207.9 L246.3,207.5 L249.4,207.4 L252.1,207.4 L254.3,207.7 L256.1,208.2 L257.4,208.9 L258.2,209.8 L258.7,210.8 M105.0,271.1 L105.1,270.1 L105.6,268.9 L106.6,267.6 L108.1,266.1 L110.0,264.5 L112.4,262.8 L115.2,261.0 L118.5,259.0 L122.1,257.0 L126.2,254.8 L130.6,252.6 L135.3,250.4 L140.3,248.1 L145.5,245.7 L151.0,243.3 L156.7,241.0 L162.6,238.6 L168.6,236.2 L174.7,233.9 L180.8,231.7 L186.9,229.5 L193.0,227.3 L199.0,225.3 L205.0,223.4 L210.8,221.5 L216.4,219.9 L221.8,218.3 L226.9,216.9 L231.8,215.7 L236.4,214.6 L240.7,213.7 L244.5,213.0 L248.1,212.5 L251.1,212.1 L253.8,212.0 L256.1,212.1 L257.8,212.4 L259.1,212.9 L260.0,213.6 L260.4,214.4 M104.9,275.5 L105.0,274.7 L105.5,273.7 L106.6,272.6 L108.1,271.3 L110.1,269.9 L112.6,268.3 L115.5,266.6 L118.8,264.8 L122.6,262.9 L126.7,260.9 L131.1,258.8 L135.9,256.6 L141.0,254.4 L146.3,252.1 L151.9,249.8 L157.6,247.5 L163.5,245.1 L169.6,242.8 L175.7,240.5 L181.9,238.2 L188.1,236.0 L194.2,233.8 L200.3,231.7 L206.3,229.7 L212.1,227.8 L217.8,226.0 L223.2,224.4 L228.4,222.8 L233.3,221.5 L238.0,220.3 L242.2,219.2 L246.1,218.3 L249.6,217.7 L252.8,217.2 L255.4,216.8 L257.7,216.7 L259.4,216.8 L260.7,217.1 L261.6,217.6 L261.9,218.2 M105.0,280.0 L105.1,279.4 L105.7,278.6 L106.8,277.7 L108.4,276.6 L110.5,275.3 L113.0,273.9 L116.0,272.4 L119.4,270.7 L123.1,268.9 L127.3,267.0 L131.8,265.1 L136.6,263.0 L141.8,260.8 L147.2,258.6 L152.8,256.4 L158.6,254.1 L164.6,251.8 L170.7,249.5 L176.8,247.2 L183.0,244.9 L189.3,242.6 L195.5,240.4 L201.6,238.3 L207.6,236.2 L213.5,234.2 L219.1,232.4 L224.6,230.6 L229.8,229.0 L234.8,227.5 L239.4,226.1 L243.7,224.9 L247.6,223.9 L251.1,223.0 L254.2,222.4 L256.9,221.9 L259.1,221.6 L260.9,221.4 L262.2,221.5 L263.0,221.8 L263.3,222.2 M105.3,284.5 L105.5,284.1 L106.1,283.5 L107.3,282.7 L108.9,281.8 L111.0,280.8 L113.6,279.5 L116.6,278.2 L120.0,276.7 L123.9,275.0 L128.1,273.3 L132.6,271.4 L137.5,269.4 L142.7,267.4 L148.1,265.3 L153.8,263.1 L159.6,260.8 L165.6,258.6 L171.8,256.3 L178.0,254.0 L184.2,251.7 L190.5,249.4 L196.7,247.2 L202.8,245.0 L208.9,242.9 L214.7,240.8 L220.4,238.9 L225.9,237.0 L231.1,235.3 L236.1,233.6 L240.7,232.2 L245.0,230.8 L248.9,229.6 L252.4,228.6 L255.5,227.7 L258.2,227.1 L260.4,226.6 L262.1,226.2 L263.4,226.1 L264.2,226.1 L264.5,226.4 M105.8,288.9 L106.0,288.7 L106.7,288.4 L108.0,287.8 L109.6,287.1 L111.8,286.2 L114.4,285.2 L117.4,284.0 L120.9,282.6 L124.8,281.1 L129.0,279.5 L133.6,277.8 L138.5,275.9 L143.7,273.9 L149.2,271.9 L154.9,269.8 L160.7,267.6 L166.8,265.4 L172.9,263.1 L179.1,260.8 L185.4,258.6 L191.7,256.3 L197.9,254.0 L204.0,251.8 L210.1,249.6 L216.0,247.5 L221.7,245.4 L227.1,243.5 L232.4,241.6 L237.3,239.9 L241.9,238.3 L246.2,236.8 L250.1,235.5 L253.6,234.3 L256.6,233.2 L259.3,232.4 L261.5,231.7 L263.2,231.2 L264.4,230.8 L265.2,230.6 L265.4,230.7 M106.6,293.3 L106.8,293.4 L107.6,293.2 L108.8,292.8 L110.5,292.3 L112.7,291.6 L115.4,290.8 L118.4,289.7 L121.9,288.5 L125.8,287.2 L130.1,285.7 L134.7,284.1 L139.6,282.4 L144.9,280.5 L150.3,278.6 L156.0,276.5 L161.9,274.4 L168.0,272.2 L174.1,270.0 L180.3,267.7 L186.6,265.4 L192.9,263.2 L199.1,260.9 L205.2,258.6 L211.3,256.4 L217.1,254.2 L222.8,252.1 L228.3,250.1 L233.5,248.1 L238.4,246.2 L243.0,244.5 L247.2,242.9 L251.1,241.4 L254.6,240.0 L257.6,238.8 L260.2,237.8 L262.4,236.9 L264.0,236.2 L265.3,235.6 L266.0,235.3 L266.2,235.1 M107.5,297.6 L107.8,297.9 L108.6,297.9 L109.9,297.8 L111.6,297.4 L113.8,296.9 L116.5,296.3 L119.6,295.4 L123.1,294.4 L127.0,293.2 L131.3,291.8 L135.9,290.4 L140.9,288.7 L146.1,287.0 L151.6,285.1 L157.3,283.2 L163.1,281.1 L169.2,279.0 L175.3,276.8 L181.5,274.6 L187.8,272.3 L194.0,270.0 L200.2,267.7 L206.4,265.4 L212.4,263.2 L218.2,260.9 L223.9,258.7 L229.3,256.6 L234.5,254.6 L239.4,252.6 L243.9,250.7 L248.1,249.0 L252.0,247.3 L255.4,245.8 L258.4,244.5 L261.0,243.2 L263.1,242.2 L264.7,241.3 L265.9,240.5 L266.5,239.9 L266.7,239.5 M108.7,301.8 L109.0,302.2 L109.8,302.5 L111.1,302.6 L112.9,302.4 L115.1,302.1 L117.8,301.6 L120.9,301.0 L124.4,300.1 L128.3,299.1 L132.6,297.9 L137.2,296.5 L142.2,295.0 L147.4,293.4 L152.9,291.6 L158.5,289.8 L164.4,287.8 L170.4,285.7 L176.5,283.6 L182.7,281.4 L189.0,279.1 L195.2,276.8 L201.3,274.5 L207.4,272.2 L213.4,269.9 L219.2,267.6 L224.8,265.4 L230.2,263.2 L235.4,261.0 L240.2,258.9 L244.7,257.0 L248.9,255.1 L252.6,253.3 L256.0,251.6 L259.0,250.1 L261.5,248.7 L263.6,247.4 L265.2,246.3 L266.3,245.4 L266.9,244.6 L267.0,244.0 M110.1,305.8 L110.4,306.4 L111.3,306.9 L112.6,307.2 L114.3,307.3 L116.6,307.2 L119.2,306.8 L122.4,306.3 L125.9,305.7 L129.8,304.8 L134.0,303.7 L138.7,302.5 L143.6,301.2 L148.8,299.6 L154.2,298.0 L159.9,296.2 L165.7,294.3 L171.7,292.3 L177.8,290.2 L183.9,288.0 L190.1,285.8 L196.3,283.5 L202.4,281.2 L208.5,278.9 L214.4,276.5 L220.1,274.2 L225.7,271.9 L231.0,269.6 L236.1,267.4 L240.9,265.2 L245.3,263.1 L249.4,261.1 L253.2,259.2 L256.5,257.4 L259.4,255.7 L261.9,254.1 L263.9,252.7 L265.4,251.4 L266.5,250.3 L267.0,249.3 L267.1,248.5 M111.6,309.6 L112.0,310.4 L112.9,311.1 L114.2,311.6 L115.9,311.9 L118.2,312.0 L120.9,311.9 L123.9,311.5 L127.5,311.0 L131.3,310.3 L135.6,309.4 L140.2,308.3 L145.1,307.1 L150.2,305.7 L155.6,304.1 L161.2,302.5 L167.0,300.6 L173.0,298.7 L179.0,296.7 L185.1,294.5 L191.2,292.3 L197.3,290.1 L203.4,287.8 L209.4,285.4 L215.3,283.0 L221.0,280.7 L226.5,278.3 L231.7,275.9 L236.7,273.6 L241.4,271.4 L245.8,269.2 L249.9,267.0 L253.5,265.0 L256.8,263.0 L259.6,261.2 L262.0,259.5 L263.9,257.9 L265.4,256.4 L266.4,255.1 L266.9,253.9 L267.0,252.9 M113.3,313.2 L113.8,314.2 L114.6,315.1 L115.9,315.8 L117.7,316.3 L119.9,316.6 L122.6,316.6 L125.7,316.5 L129.1,316.1 L133.0,315.6 L137.2,314.8 L141.8,313.9 L146.6,312.8 L151.7,311.5 L157.1,310.1 L162.6,308.5 L168.4,306.7 L174.3,304.9 L180.2,302.9 L186.3,300.8 L192.3,298.7 L198.4,296.4 L204.4,294.1 L210.3,291.7 L216.1,289.3 L221.7,286.9 L227.1,284.5 L232.3,282.1 L237.2,279.7 L241.8,277.4 L246.1,275.1 L250.1,272.8 L253.7,270.7 L256.9,268.6 L259.6,266.6 L261.9,264.7 L263.8,263.0 L265.2,261.3 L266.1,259.8 L266.6,258.4 L266.7,257.2 M115.1,316.6 L115.7,317.7 L116.6,318.8 L117.9,319.7 L119.6,320.4 L121.8,320.9 L124.5,321.1 L127.5,321.1 L130.9,321.0 L134.8,320.6 L138.9,320.0 L143.4,319.2 L148.2,318.2 L153.3,317.1 L158.6,315.7 L164.1,314.2 L169.7,312.6 L175.5,310.8 L181.4,308.9 L187.4,306.9 L193.4,304.7 L199.3,302.5 L205.2,300.2 L211.1,297.8 L216.8,295.4 L222.3,293.0 L227.6,290.5 L232.7,288.1 L237.5,285.6 L242.1,283.2 L246.3,280.8 L250.2,278.4 L253.7,276.2 L256.8,274.0 L259.4,271.8 L261.7,269.8 L263.5,267.9 L264.8,266.1 L265.6,264.4 L266.0,262.8 L266.2,261.4 M117.0,319.8 L117.7,321.0 L118.6,322.2 L119.9,323.3 L121.7,324.2 L123.8,324.8 L126.4,325.3 L129.4,325.5 L132.8,325.5 L136.6,325.3 L140.7,324.8 L145.2,324.2 L149.9,323.3 L154.9,322.3 L160.1,321.1 L165.5,319.7 L171.1,318.1 L176.8,316.4 L182.6,314.6 L188.5,312.6 L194.4,310.5 L200.2,308.3 L206.0,306.0 L211.8,303.7 L217.4,301.3 L222.8,298.8 L228.0,296.3 L233.0,293.8 L237.7,291.3 L242.2,288.8 L246.3,286.3 L250.1,283.8 L253.5,281.4 L256.5,279.1 L259.0,276.9 L261.2,274.7 L262.9,272.6 L264.1,270.7 L264.9,268.8 L265.3,267.1 L265.6,265.5 M118.9,322.7 L119.8,324.0 L120.9,325.3 L122.1,326.6 L123.8,327.6 L126.0,328.5 L128.5,329.1 L131.5,329.5 L134.8,329.6 L138.5,329.6 L142.6,329.3 L146.9,328.8 L151.6,328.1 L156.5,327.2 L161.6,326.1 L167.0,324.8 L172.5,323.3 L178.1,321.7 L183.8,319.9 L189.5,318.0 L195.3,316.0 L201.1,313.8 L206.8,311.5 L212.4,309.2 L217.8,306.8 L223.2,304.3 L228.3,301.8 L233.2,299.2 L237.8,296.6 L242.1,294.1 L246.1,291.5 L249.8,289.0 L253.1,286.5 L256.0,284.0 L258.4,281.7 L260.5,279.4 L262.1,277.2 L263.3,275.1 L264.0,273.0 L264.4,271.2 L264.8,269.5 M121.0,325.4 L122.0,326.7 L123.1,328.1 L124.4,329.5 L126.1,330.7 L128.2,331.8 L130.7,332.5 L133.6,333.1 L136.9,333.4 L140.5,333.5 L144.5,333.4 L148.8,333.0 L153.3,332.5 L158.1,331.7 L163.2,330.7 L168.4,329.5 L173.8,328.2 L179.3,326.6 L184.9,324.9 L190.5,323.0 L196.2,321.0 L201.8,318.9 L207.4,316.7 L212.9,314.4 L218.2,311.9 L223.4,309.4 L228.4,306.9 L233.2,304.3 L237.7,301.7 L241.9,299.1 L245.8,296.4 L249.3,293.8 L252.5,291.2 L255.3,288.7 L257.6,286.2 L259.6,283.8 L261.1,281.4 L262.2,279.2 L262.9,277.1 L263.4,275.1 L263.9,273.3 M123.0,327.9 L124.2,329.2 L125.4,330.6 L126.8,332.0 L128.5,333.4 L130.5,334.6 L133.0,335.6 L135.8,336.3 L139.0,336.8 L142.6,337.1 L146.4,337.1 L150.6,336.9 L155.1,336.4 L159.8,335.8 L164.7,334.9 L169.8,333.8 L175.1,332.6 L180.5,331.1 L186.0,329.5 L191.5,327.7 L197.0,325.7 L202.5,323.7 L207.9,321.4 L213.3,319.1 L218.5,316.7 L223.5,314.2 L228.4,311.7 L233.0,309.0 L237.4,306.4 L241.5,303.7 L245.2,301.0 L248.6,298.3 L251.7,295.7 L254.4,293.0 L256.6,290.4 L258.5,287.9 L259.9,285.4 L260.9,283.1 L261.7,280.8 L262.3,278.8 L262.9,276.9 M125.1,330.2 L126.3,331.5 L127.7,332.8 L129.2,334.2 L130.9,335.7 L132.9,337.1 L135.3,338.2 L138.1,339.1 L141.2,339.7 L144.6,340.1 L148.4,340.3 L152.5,340.2 L156.9,339.9 L161.5,339.4 L166.3,338.7 L171.3,337.7 L176.4,336.5 L181.6,335.2 L187.0,333.6 L192.3,331.9 L197.7,330.0 L203.1,328.0 L208.4,325.8 L213.6,323.5 L218.6,321.1 L223.6,318.6 L228.3,316.0 L232.7,313.4 L237.0,310.7 L240.9,308.0 L244.5,305.2 L247.8,302.5 L250.7,299.7 L253.3,297.0 L255.4,294.3 L257.2,291.7 L258.5,289.1 L259.5,286.7 L260.4,284.4 L261.2,282.3 L261.8,280.3 M127.1,332.3 L128.5,333.6 L130.0,334.9 L131.6,336.2 L133.4,337.6 L135.4,339.1 L137.7,340.4 L140.4,341.4 L143.4,342.2 L146.8,342.8 L150.5,343.1 L154.4,343.2 L158.7,343.0 L163.1,342.6 L167.8,341.9 L172.7,341.1 L177.6,340.0 L182.8,338.7 L187.9,337.3 L193.2,335.6 L198.4,333.8 L203.6,331.8 L208.7,329.7 L213.8,327.4 L218.7,325.0 L223.4,322.5 L228.0,320.0 L232.3,317.3 L236.4,314.6 L240.2,311.9 L243.7,309.1 L246.8,306.3 L249.6,303.5 L252.0,300.7 L254.0,297.9 L255.6,295.2 L256.9,292.5 L258.1,290.1 L259.1,287.7 L259.9,285.6 L260.7,283.5 M129.2,334.2 L130.6,335.4 L132.2,336.7 L133.9,338.0 L135.8,339.3 L137.8,340.7 L140.1,342.0 L142.7,343.3 L145.6,344.2 L148.9,344.9 L152.5,345.4 L156.3,345.6 L160.4,345.5 L164.8,345.2 L169.3,344.7 L174.0,344.0 L178.9,343.0 L183.8,341.8 L188.8,340.4 L193.9,338.9 L199.0,337.1 L204.0,335.2 L209.0,333.1 L213.8,330.9 L218.6,328.5 L223.2,326.0 L227.6,323.5 L231.7,320.8 L235.6,318.1 L239.3,315.3 L242.6,312.5 L245.6,309.6 L248.3,306.8 L250.5,303.9 L252.4,301.1 L254.0,298.3 L255.4,295.7 L256.6,293.2 L257.7,290.9 L258.7,288.7 L259.5,286.6 M131.2,335.9 L132.7,337.1 L134.3,338.3 L136.1,339.6 L138.1,340.8 L140.2,342.1 L142.5,343.4 L145.1,344.6 L147.9,345.7 L151.1,346.6 L154.5,347.1 L158.2,347.5 L162.2,347.6 L166.4,347.4 L170.8,347.0 L175.3,346.3 L180.0,345.5 L184.8,344.4 L189.7,343.1 L194.5,341.6 L199.4,339.9 L204.3,338.0 L209.1,336.0 L213.8,333.8 L218.4,331.5 L222.8,329.0 L227.0,326.5 L231.0,323.8 L234.7,321.1 L238.2,318.3 L241.4,315.4 L244.2,312.5 L246.7,309.6 L248.9,306.7 L250.7,303.9 L252.4,301.2 L253.8,298.6 L255.1,296.1 L256.3,293.8 L257.4,291.6 L258.3,289.5 M133.1,337.4 L134.7,338.6 L136.4,339.8 L138.3,341.0 L140.3,342.1 L142.5,343.3 L144.8,344.5 L147.4,345.6 L150.2,346.7 L153.2,347.7 L156.5,348.4 L160.1,348.9 L163.9,349.1 L168.0,349.0 L172.2,348.7 L176.6,348.2 L181.1,347.4 L185.7,346.4 L190.4,345.2 L195.1,343.8 L199.8,342.2 L204.5,340.4 L209.1,338.4 L213.6,336.2 L218.0,333.9 L222.3,331.5 L226.3,329.0 L230.1,326.3 L233.7,323.6 L237.0,320.8 L240.0,317.9 L242.7,315.0 L245.1,312.1 L247.2,309.2 L249.1,306.4 L250.8,303.8 L252.3,301.2 L253.7,298.8 L254.9,296.5 L256.1,294.3 L257.1,292.2 M135.1,338.8 L136.7,339.9 L138.4,341.1 L140.3,342.2 L142.4,343.3 L144.6,344.4 L147.0,345.4 L149.6,346.5 L152.4,347.4 L155.4,348.3 L158.6,349.1 L162.0,349.7 L165.7,350.0 L169.5,350.1 L173.6,349.9 L177.8,349.5 L182.2,348.8 L186.6,347.9 L191.1,346.8 L195.6,345.4 L200.1,343.9 L204.6,342.1 L209.0,340.2 L213.4,338.1 L217.6,335.9 L221.6,333.5 L225.5,331.0 L229.1,328.3 L232.5,325.6 L235.6,322.8 L238.5,319.9 L241.0,317.0 L243.4,314.2 L245.5,311.5 L247.5,308.8 L249.2,306.2 L250.8,303.7 L252.3,301.3 L253.6,299.0 L254.8,296.8 L255.8,294.8 M119.9,222.5 L118.7,224.5 L117.5,226.7 L116.3,229.0 L115.1,231.5 L113.9,234.1 L112.7,236.9 L111.5,239.9 L110.4,243.0 L109.3,246.3 L108.3,249.8 L107.4,253.4 L106.6,257.2 L106.0,261.2 L105.4,265.3 L105.1,269.5 L104.9,273.8 L104.9,278.1 L105.1,282.5 L105.6,286.8 L106.2,291.1 L107.0,295.4 L108.1,299.5 L109.3,303.5 L110.7,307.3 L112.2,311.0 L113.9,314.4 L115.7,317.7 L117.6,320.7 L119.5,323.5 L121.5,326.1 L123.5,328.5 L125.5,330.7 L127.5,332.7 L129.5,334.5 L131.4,336.1 L133.4,337.6 L135.2,339.0 L137.0,340.2 L138.8,341.3 L140.5,342.3 M121.6,219.7 L120.3,221.7 L119.1,223.8 L117.8,226.1 L116.5,228.6 L115.2,231.2 L113.9,234.0 L112.6,237.0 L111.4,240.2 L110.2,243.6 L109.1,247.2 L108.0,251.0 L107.1,255.0 L106.4,259.1 L105.8,263.5 L105.5,267.9 L105.4,272.4 L105.5,277.0 L105.8,281.6 L106.3,286.3 L107.0,290.9 L107.8,295.4 L108.9,299.8 L110.1,304.1 L111.5,308.2 L113.1,312.1 L114.8,315.8 L116.7,319.2 L118.7,322.4 L120.8,325.3 L123.0,327.9 L125.1,330.3 L127.3,332.4 L129.4,334.4 L131.5,336.2 L133.6,337.8 L135.6,339.2 L137.5,340.5 L139.4,341.6 L141.2,342.7 L142.9,343.6 M123.5,216.7 L122.2,218.7 L120.9,220.8 L119.5,223.0 L118.1,225.5 L116.8,228.1 L115.4,230.9 L114.0,233.9 L112.6,237.2 L111.2,240.6 L110.0,244.3 L109.0,248.3 L108.1,252.5 L107.5,256.8 L107.0,261.4 L106.8,266.0 L106.8,270.8 L106.9,275.7 L107.3,280.5 L107.8,285.4 L108.6,290.3 L109.5,295.0 L110.6,299.7 L111.9,304.3 L113.3,308.7 L114.9,312.8 L116.6,316.8 L118.4,320.5 L120.4,323.9 L122.5,327.0 L124.7,329.8 L127.0,332.2 L129.3,334.3 L131.6,336.2 L133.8,337.9 L136.0,339.5 L138.0,340.8 L140.0,342.0 L142.0,343.1 L143.8,344.0 L145.6,344.8 M125.7,213.7 L124.3,215.5 L122.9,217.6 L121.5,219.7 L120.1,222.1 L118.6,224.7 L117.1,227.5 L115.5,230.5 L114.0,233.8 L112.7,237.4 L111.6,241.2 L110.7,245.4 L110.0,249.7 L109.4,254.3 L109.1,259.1 L109.0,263.9 L109.0,268.9 L109.3,274.0 L109.7,279.1 L110.3,284.3 L111.1,289.3 L112.0,294.4 L113.2,299.3 L114.4,304.1 L115.9,308.8 L117.5,313.2 L119.2,317.4 L121.0,321.4 L123.0,325.0 L125.0,328.4 L127.2,331.4 L129.4,334.0 L131.7,336.3 L134.1,338.2 L136.4,339.8 L138.7,341.2 L140.8,342.4 L142.9,343.5 L144.8,344.5 L146.7,345.3 L148.5,346.1 M128.1,210.5 L126.7,212.2 L125.3,214.2 L123.8,216.3 L122.3,218.6 L120.7,221.1 L119.1,223.8 L117.5,226.9 L116.2,230.3 L115.0,234.0 L114.1,238.0 L113.3,242.3 L112.7,246.8 L112.2,251.6 L112.0,256.5 L112.0,261.6 L112.1,266.8 L112.4,272.1 L112.9,277.4 L113.6,282.8 L114.4,288.1 L115.4,293.4 L116.6,298.6 L117.9,303.6 L119.3,308.5 L120.9,313.2 L122.6,317.6 L124.4,321.8 L126.3,325.7 L128.3,329.3 L130.4,332.6 L132.5,335.4 L134.8,337.9 L137.1,340.0 L139.4,341.6 L141.7,342.9 L143.9,344.0 L146.0,345.0 L148.0,345.9 L149.9,346.6 L151.7,347.2 M130.8,207.2 L129.4,208.8 L127.9,210.6 L126.4,212.6 L124.8,214.8 L123.2,217.2 L121.7,220.0 L120.3,223.2 L119.1,226.7 L118.1,230.5 L117.3,234.7 L116.6,239.1 L116.1,243.8 L115.8,248.7 L115.7,253.8 L115.8,259.1 L116.0,264.5 L116.4,270.0 L117.0,275.5 L117.7,281.1 L118.6,286.6 L119.6,292.1 L120.8,297.5 L122.1,302.8 L123.5,307.9 L125.0,312.8 L126.7,317.5 L128.5,321.9 L130.3,326.0 L132.3,329.9 L134.3,333.3 L136.4,336.4 L138.5,339.1 L140.7,341.4 L142.9,343.2 L145.1,344.6 L147.4,345.6 L149.5,346.4 L151.5,347.1 L153.4,347.7 L155.1,348.3 M133.8,203.8 L132.4,205.3 L130.9,207.0 L129.4,208.8 L127.8,210.9 L126.3,213.3 L124.9,216.2 L123.8,219.4 L122.7,223.0 L121.9,226.9 L121.2,231.2 L120.7,235.8 L120.4,240.6 L120.2,245.7 L120.2,250.9 L120.3,256.4 L120.7,261.9 L121.1,267.6 L121.8,273.3 L122.5,279.1 L123.5,284.8 L124.5,290.5 L125.7,296.1 L127.0,301.6 L128.4,306.9 L129.9,312.1 L131.6,317.0 L133.3,321.6 L135.1,326.0 L137.0,330.0 L138.9,333.6 L140.9,336.9 L142.9,339.8 L145.0,342.3 L147.0,344.3 L149.2,345.9 L151.3,347.0 L153.4,347.7 L155.3,348.3 L157.1,348.8 L158.8,349.2 M137.1,200.4 L135.7,201.7 L134.3,203.2 L132.8,204.9 L131.3,207.0 L130.0,209.4 L128.9,212.3 L127.9,215.6 L127.0,219.3 L126.4,223.3 L125.8,227.7 L125.5,232.4 L125.3,237.3 L125.2,242.5 L125.3,247.9 L125.6,253.5 L126.0,259.2 L126.6,265.0 L127.3,270.9 L128.1,276.9 L129.0,282.8 L130.1,288.7 L131.3,294.5 L132.6,300.1 L134.0,305.7 L135.5,311.0 L137.1,316.1 L138.8,320.9 L140.5,325.5 L142.3,329.7 L144.1,333.6 L146.0,337.1 L147.9,340.1 L149.8,342.8 L151.8,345.0 L153.7,346.8 L155.7,348.1 L157.6,348.9 L159.5,349.3 L161.2,349.6 L162.9,349.9 M140.7,197.0 L139.4,198.1 L138.1,199.4 L136.7,201.0 L135.5,203.1 L134.4,205.6 L133.4,208.5 L132.6,211.9 L132.0,215.6 L131.5,219.7 L131.1,224.1 L130.9,228.9 L130.8,233.9 L130.9,239.2 L131.2,244.8 L131.5,250.5 L132.0,256.3 L132.7,262.3 L133.4,268.3 L134.3,274.4 L135.3,280.5 L136.4,286.6 L137.6,292.5 L138.9,298.4 L140.3,304.1 L141.7,309.6 L143.2,314.9 L144.8,319.9 L146.5,324.6 L148.2,329.0 L149.9,333.1 L151.7,336.7 L153.4,340.0 L155.2,342.9 L157.0,345.2 L158.8,347.2 L160.6,348.6 L162.3,349.6 L164.0,350.1 L165.7,350.3 L167.2,350.4 M144.7,193.6 L143.5,194.6 L142.3,195.7 L141.1,197.3 L140.1,199.4 L139.2,201.9 L138.5,204.8 L137.9,208.2 L137.4,212.0 L137.1,216.1 L136.9,220.6 L136.9,225.4 L137.0,230.5 L137.2,235.9 L137.5,241.5 L138.0,247.4 L138.6,253.3 L139.3,259.4 L140.1,265.6 L141.1,271.8 L142.1,278.0 L143.2,284.2 L144.4,290.3 L145.7,296.3 L147.0,302.2 L148.4,307.9 L149.9,313.3 L151.4,318.5 L153.0,323.4 L154.6,328.0 L156.2,332.2 L157.8,336.0 L159.4,339.5 L161.1,342.5 L162.7,345.0 L164.3,347.1 L165.9,348.7 L167.4,349.9 L169.0,350.5 L170.4,350.6 L171.8,350.7 M149.0,190.3 L148.0,191.1 L146.9,192.2 L146.0,193.7 L145.3,195.8 L144.6,198.3 L144.1,201.2 L143.7,204.6 L143.4,208.4 L143.3,212.6 L143.3,217.1 L143.4,222.0 L143.6,227.1 L144.0,232.6 L144.4,238.3 L145.0,244.2 L145.7,250.2 L146.5,256.4 L147.4,262.7 L148.3,269.0 L149.4,275.4 L150.5,281.7 L151.7,287.9 L153.0,294.1 L154.3,300.1 L155.6,305.9 L157.0,311.5 L158.5,316.8 L159.9,321.8 L161.4,326.6 L162.9,330.9 L164.4,334.9 L165.9,338.5 L167.3,341.7 L168.8,344.4 L170.2,346.6 L171.6,348.4 L172.9,349.6 L174.2,350.4 L175.5,350.7 L176.6,350.6 M153.6,187.2 L152.8,187.8 L152.0,188.8 L151.3,190.3 L150.8,192.3 L150.4,194.8 L150.1,197.8 L149.9,201.1 L149.8,204.9 L149.9,209.1 L150.0,213.7 L150.3,218.6 L150.7,223.8 L151.2,229.3 L151.7,235.0 L152.4,241.0 L153.2,247.1 L154.1,253.3 L155.0,259.7 L156.0,266.1 L157.1,272.6 L158.2,279.0 L159.4,285.3 L160.6,291.6 L161.9,297.7 L163.2,303.6 L164.6,309.3 L165.9,314.8 L167.3,320.0 L168.6,324.8 L170.0,329.3 L171.3,333.4 L172.6,337.2 L173.9,340.5 L175.2,343.3 L176.4,345.7 L177.6,347.6 L178.7,349.0 L179.8,349.9 L180.8,350.3 L181.7,350.2 M158.5,184.2 L157.9,184.7 L157.4,185.7 L157.0,187.2 L156.7,189.1 L156.5,191.6 L156.4,194.5 L156.4,197.8 L156.5,201.6 L156.8,205.8 L157.1,210.4 L157.5,215.3 L158.1,220.5 L158.7,226.0 L159.4,231.8 L160.2,237.8 L161.0,243.9 L162.0,250.2 L163.0,256.6 L164.0,263.1 L165.1,269.6 L166.3,276.1 L167.4,282.5 L168.6,288.9 L169.9,295.1 L171.1,301.1 L172.4,306.9 L173.6,312.5 L174.9,317.8 L176.1,322.7 L177.3,327.4 L178.5,331.6 L179.6,335.5 L180.7,338.9 L181.8,341.9 L182.8,344.4 L183.8,346.4 L184.7,347.9 L185.5,348.9 L186.3,349.4 L187.0,349.4 M163.6,181.6 L163.2,182.0 L163.0,182.9 L162.8,184.3 L162.8,186.2 L162.8,188.6 L163.0,191.4 L163.2,194.8 L163.5,198.5 L164.0,202.6 L164.5,207.2 L165.1,212.1 L165.7,217.3 L166.5,222.8 L167.3,228.6 L168.2,234.6 L169.1,240.8 L170.1,247.1 L171.2,253.5 L172.3,260.1 L173.4,266.6 L174.5,273.1 L175.7,279.6 L176.8,286.0 L178.0,292.3 L179.2,298.4 L180.4,304.3 L181.5,310.0 L182.6,315.3 L183.7,320.4 L184.8,325.1 L185.8,329.5 L186.8,333.4 L187.7,336.9 L188.6,340.0 L189.4,342.6 L190.1,344.8 L190.8,346.4 L191.4,347.5 L191.9,348.2 L192.3,348.3 M168.9,179.3 L168.8,179.6 L168.8,180.4 L168.9,181.7 L169.1,183.5 L169.3,185.9 L169.7,188.7 L170.2,191.9 L170.7,195.6 L171.3,199.7 L172.0,204.2 L172.7,209.0 L173.6,214.2 L174.4,219.7 L175.4,225.5 L176.4,231.5 L177.4,237.6 L178.4,244.0 L179.5,250.4 L180.6,257.0 L181.8,263.5 L182.9,270.1 L184.1,276.6 L185.2,283.1 L186.3,289.4 L187.4,295.5 L188.5,301.5 L189.5,307.2 L190.5,312.7 L191.5,317.8 L192.4,322.6 L193.3,327.0 L194.1,331.1 L194.8,334.7 L195.4,337.8 L196.0,340.6 L196.5,342.8 L197.0,344.5 L197.3,345.8 L197.6,346.5 L197.7,346.7 M174.3,177.3 L174.4,177.5 L174.7,178.2 L175.0,179.5 L175.5,181.2 L176.0,183.4 L176.6,186.2 L177.2,189.3 L177.9,192.9 L178.7,197.0 L179.6,201.4 L180.5,206.2 L181.5,211.3 L182.5,216.8 L183.5,222.5 L184.6,228.5 L185.7,234.6 L186.8,240.9 L187.9,247.4 L189.1,253.9 L190.2,260.5 L191.4,267.0 L192.5,273.6 L193.6,280.0 L194.6,286.4 L195.6,292.5 L196.6,298.5 L197.6,304.3 L198.4,309.8 L199.3,315.0 L200.0,319.8 L200.7,324.3 L201.3,328.4 L201.8,332.1 L202.3,335.3 L202.7,338.1 L202.9,340.5 L203.1,342.3 L203.2,343.6 L203.2,344.4 L203.1,344.7 M179.7,175.7 L180.1,175.8 L180.6,176.5 L181.2,177.6 L181.9,179.2 L182.6,181.4 L183.4,184.0 L184.3,187.1 L185.2,190.6 L186.2,194.5 L187.2,198.9 L188.3,203.6 L189.4,208.7 L190.5,214.0 L191.6,219.7 L192.8,225.6 L194.0,231.7 L195.2,238.0 L196.3,244.4 L197.5,250.9 L198.6,257.4 L199.7,263.9 L200.8,270.5 L201.9,276.9 L202.9,283.2 L203.8,289.4 L204.7,295.4 L205.5,301.2 L206.3,306.7 L206.9,311.9 L207.5,316.8 L208.0,321.4 L208.5,325.5 L208.8,329.2 L209.0,332.6 L209.2,335.4 L209.2,337.8 L209.2,339.7 L209.0,341.1 L208.8,342.0 L208.4,342.4 M185.0,174.6 L185.7,174.6 L186.5,175.1 L187.3,176.1 L188.2,177.6 L189.2,179.6 L190.2,182.1 L191.3,185.1 L192.4,188.5 L193.5,192.4 L194.7,196.6 L195.9,201.3 L197.1,206.2 L198.4,211.5 L199.6,217.1 L200.9,222.9 L202.1,228.9 L203.4,235.1 L204.6,241.5 L205.7,247.9 L206.9,254.4 L208.0,260.9 L209.0,267.4 L210.0,273.8 L211.0,280.1 L211.8,286.2 L212.6,292.2 L213.3,298.0 L213.9,303.5 L214.5,308.7 L214.9,313.6 L215.2,318.2 L215.5,322.4 L215.6,326.2 L215.6,329.5 L215.5,332.4 L215.3,334.9 L215.0,336.8 L214.6,338.3 L214.1,339.3 L213.5,339.8 M190.3,173.8 L191.2,173.7 L192.2,174.1 L193.3,175.0 L194.4,176.4 L195.6,178.3 L196.8,180.7 L198.1,183.5 L199.4,186.8 L200.7,190.6 L202.0,194.7 L203.4,199.2 L204.7,204.0 L206.1,209.2 L207.4,214.7 L208.8,220.4 L210.1,226.3 L211.4,232.4 L212.6,238.7 L213.8,245.0 L214.9,251.4 L216.0,257.9 L217.0,264.3 L217.9,270.7 L218.8,276.9 L219.6,283.0 L220.3,289.0 L220.8,294.7 L221.3,300.2 L221.7,305.4 L222.0,310.3 L222.1,314.9 L222.2,319.1 L222.1,322.9 L221.9,326.2 L221.6,329.2 L221.2,331.7 L220.7,333.7 L220.0,335.2 L219.2,336.2 L218.4,336.8 M195.4,173.4 L196.5,173.3 L197.8,173.6 L199.1,174.4 L200.4,175.6 L201.8,177.4 L203.2,179.6 L204.7,182.3 L206.1,185.5 L207.6,189.1 L209.1,193.1 L210.6,197.4 L212.1,202.2 L213.5,207.2 L215.0,212.5 L216.4,218.1 L217.7,223.9 L219.0,229.9 L220.3,236.1 L221.5,242.3 L222.6,248.6 L223.7,255.0 L224.6,261.3 L225.5,267.6 L226.3,273.8 L227.0,279.8 L227.6,285.7 L228.0,291.4 L228.4,296.9 L228.6,302.0 L228.7,306.9 L228.7,311.4 L228.6,315.6 L228.3,319.4 L227.9,322.8 L227.4,325.7 L226.7,328.2 L226.0,330.3 L225.1,331.8 L224.0,332.9 L223.0,333.7 M200.2,173.3 L201.6,173.4 L203.0,173.5 L204.6,174.1 L206.1,175.3 L207.7,176.9 L209.3,179.0 L210.9,181.5 L212.6,184.5 L214.2,188.0 L215.8,191.8 L217.4,196.0 L219.0,200.6 L220.6,205.5 L222.1,210.7 L223.6,216.1 L225.0,221.8 L226.3,227.7 L227.6,233.7 L228.8,239.8 L229.9,246.0 L230.9,252.2 L231.9,258.4 L232.7,264.6 L233.4,270.7 L234.0,276.6 L234.5,282.5 L234.8,288.1 L235.0,293.5 L235.1,298.6 L235.1,303.4 L234.9,307.9 L234.6,312.0 L234.1,315.8 L233.5,319.2 L232.8,322.1 L231.9,324.6 L230.9,326.7 L229.7,328.3 L228.5,329.4 L227.3,330.4 M204.8,173.6 L206.3,173.7 L208.0,173.9 L209.7,174.4 L211.4,175.4 L213.2,176.8 L215.0,178.8 L216.8,181.1 L218.6,184.0 L220.3,187.3 L222.1,190.9 L223.8,195.0 L225.5,199.4 L227.2,204.1 L228.8,209.1 L230.3,214.4 L231.7,219.9 L233.1,225.6 L234.4,231.5 L235.6,237.4 L236.7,243.5 L237.7,249.6 L238.6,255.7 L239.3,261.7 L240.0,267.7 L240.5,273.5 L240.8,279.2 L241.1,284.8 L241.2,290.1 L241.1,295.1 L240.9,299.9 L240.5,304.3 L240.0,308.4 L239.4,312.1 L238.6,315.5 L237.6,318.4 L236.5,320.9 L235.3,323.0 L233.9,324.6 L232.6,325.9 L231.3,327.0 M209.1,174.1 L210.8,174.4 L212.5,174.7 L214.4,175.1 L216.3,175.9 L218.3,177.2 L220.2,179.0 L222.2,181.2 L224.1,183.9 L226.0,186.9 L227.9,190.4 L229.7,194.3 L231.5,198.5 L233.2,203.1 L234.9,207.9 L236.5,213.0 L238.0,218.3 L239.4,223.9 L240.7,229.5 L241.9,235.3 L243.0,241.2 L243.9,247.1 L244.7,253.1 L245.4,259.0 L246.0,264.8 L246.4,270.5 L246.7,276.1 L246.8,281.5 L246.7,286.7 L246.5,291.6 L246.2,296.3 L245.6,300.7 L245.0,304.7 L244.1,308.4 L243.1,311.7 L242.0,314.6 L240.7,317.0 L239.2,319.1 L237.7,320.8 L236.3,322.3 L234.9,323.6 M213.2,174.8 L214.9,175.2 L216.7,175.7 L218.6,176.3 L220.7,177.0 L222.8,178.1 L225.0,179.7 L227.0,181.7 L229.1,184.2 L231.1,187.1 L233.1,190.4 L235.0,194.0 L236.9,198.0 L238.7,202.4 L240.4,207.0 L242.1,211.9 L243.6,217.1 L245.0,222.4 L246.3,227.9 L247.5,233.5 L248.5,239.2 L249.5,244.9 L250.2,250.7 L250.9,256.4 L251.3,262.1 L251.7,267.6 L251.8,273.1 L251.8,278.3 L251.6,283.4 L251.3,288.2 L250.8,292.8 L250.1,297.1 L249.3,301.0 L248.2,304.6 L247.1,307.8 L245.7,310.7 L244.2,313.1 L242.6,315.2 L241.1,317.0 L239.6,318.7 L238.2,320.2 M216.9,175.7 L218.6,176.3 L220.5,176.9 L222.5,177.6 L224.6,178.4 L226.9,179.4 L229.1,180.8 L231.3,182.6 L233.5,184.9 L235.6,187.6 L237.7,190.7 L239.7,194.1 L241.7,198.0 L243.5,202.1 L245.3,206.5 L247.0,211.2 L248.5,216.1 L249.9,221.2 L251.2,226.5 L252.4,231.9 L253.4,237.4 L254.3,242.9 L255.0,248.5 L255.6,254.0 L256.0,259.5 L256.2,264.9 L256.3,270.2 L256.2,275.3 L255.9,280.2 L255.4,284.9 L254.7,289.3 L253.9,293.5 L252.9,297.3 L251.7,300.8 L250.3,304.0 L248.8,306.8 L247.2,309.2 L245.6,311.4 L244.1,313.4 L242.6,315.2 L241.2,316.8 M220.3,176.8 L222.1,177.4 L224.0,178.1 L226.0,179.0 L228.1,180.0 L230.3,181.1 L232.6,182.4 L234.9,184.0 L237.2,186.1 L239.5,188.6 L241.6,191.4 L243.7,194.7 L245.7,198.3 L247.6,202.2 L249.4,206.4 L251.1,210.8 L252.7,215.5 L254.1,220.4 L255.4,225.4 L256.6,230.6 L257.6,235.9 L258.4,241.2 L259.1,246.6 L259.6,251.9 L259.9,257.2 L260.0,262.4 L260.0,267.5 L259.8,272.4 L259.3,277.2 L258.7,281.7 L257.9,286.0 L257.0,290.0 L255.8,293.7 L254.5,297.1 L252.9,300.2 L251.3,302.9 L249.7,305.4 L248.2,307.7 L246.7,309.8 L245.3,311.8 L243.9,313.5 M223.5,177.9 L225.3,178.7 L227.2,179.5 L229.1,180.5 L231.2,181.6 L233.3,182.8 L235.6,184.2 L237.9,185.8 L240.3,187.7 L242.6,190.0 L244.8,192.6 L247.0,195.6 L249.0,199.0 L251.0,202.6 L252.8,206.6 L254.5,210.8 L256.1,215.2 L257.6,219.9 L258.8,224.7 L260.0,229.6 L260.9,234.7 L261.7,239.7 L262.3,244.9 L262.7,250.0 L263.0,255.1 L263.0,260.1 L262.9,264.9 L262.6,269.7 L262.0,274.3 L261.3,278.6 L260.4,282.8 L259.3,286.6 L258.0,290.2 L256.5,293.5 L254.9,296.5 L253.4,299.3 L251.9,301.9 L250.5,304.3 L249.1,306.4 L247.7,308.5 L246.3,310.3 M226.4,179.2 L228.2,180.0 L230.0,180.9 L232.0,182.0 L234.0,183.2 L236.0,184.5 L238.2,186.1 L240.4,187.8 L242.7,189.7 L245.0,191.8 L247.3,194.2 L249.5,197.0 L251.6,200.1 L253.6,203.5 L255.4,207.2 L257.1,211.2 L258.7,215.3 L260.1,219.7 L261.4,224.3 L262.5,229.0 L263.4,233.7 L264.2,238.6 L264.7,243.5 L265.1,248.3 L265.2,253.2 L265.2,258.0 L265.0,262.6 L264.5,267.2 L263.9,271.5 L263.0,275.7 L262.0,279.7 L260.8,283.4 L259.4,286.8 L258.0,290.1 L256.6,293.1 L255.2,295.9 L253.9,298.5 L252.5,301.0 L251.1,303.2 L249.8,305.3 L248.5,307.3 M229.1,180.4 L230.8,181.3 L232.6,182.4 L234.5,183.5 L236.4,184.8 L238.4,186.2 L240.5,187.8 L242.6,189.6 L244.7,191.6 L246.9,193.7 L249.0,196.1 L251.2,198.7 L253.3,201.6 L255.3,204.8 L257.2,208.2 L258.9,211.9 L260.5,215.8 L261.9,219.9 L263.1,224.2 L264.2,228.6 L265.0,233.1 L265.7,237.7 L266.2,242.4 L266.5,247.0 L266.6,251.6 L266.5,256.1 L266.2,260.5 L265.6,264.9 L264.9,269.0 L264.0,273.0 L262.9,276.8 L261.8,280.4 L260.6,283.8 L259.4,287.0 L258.1,290.0 L256.8,292.8 L255.5,295.4 L254.2,297.9 L252.9,300.2 L251.7,302.3 L250.4,304.3 M231.5,181.7 L233.2,182.7 L235.0,183.8 L236.8,185.0 L238.6,186.4 L240.6,187.9 L242.5,189.5 L244.5,191.3 L246.5,193.3 L248.5,195.5 L250.5,197.9 L252.5,200.5 L254.4,203.3 L256.3,206.3 L258.1,209.6 L259.8,213.0 L261.3,216.7 L262.7,220.5 L263.9,224.5 L265.0,228.6 L265.8,232.9 L266.4,237.2 L266.9,241.5 L267.1,245.9 L267.1,250.2 L266.9,254.5 L266.6,258.7 L266.0,262.8 L265.4,266.8 L264.6,270.6 L263.7,274.2 L262.7,277.7 L261.6,281.0 L260.5,284.1 L259.3,287.1 L258.1,289.9 L256.9,292.5 L255.7,295.0 L254.5,297.3 L253.3,299.5 L252.1,301.5" stroke="#0c2a60" stroke-width="0.75" fill="none" clip-path="url(#clv)"/>
<path d="M186.4,215.5 L187.3,213.8 L188.2,212.0 L189.3,210.1 L190.5,208.2 L191.8,206.2 L193.3,204.1 L194.9,202.0 L196.7,199.9 L198.7,197.7 L200.8,195.6 L203.2,193.4 L205.7,191.3 L208.5,189.2 L211.5,187.1 L214.6,185.2 L218.0,183.3 L221.6,181.6 L225.3,180.1 L229.1,178.7 L233.1,177.5 L237.1,176.5 L241.1,175.7 L245.2,175.1 L249.2,174.7 L253.2,174.5 L257.2,174.5 L261.0,174.6 L264.7,174.9 L268.3,175.4 L271.7,176.0 L274.9,176.6 L278.0,177.4 L281.0,178.2 L283.7,179.1 L286.4,180.0 L288.8,180.9 L291.1,181.9 L293.3,182.9 L295.4,183.9 L297.3,184.8 M185.2,218.2 L186.0,216.4 L186.9,214.5 L187.9,212.6 L189.0,210.6 L190.3,208.5 L191.7,206.4 L193.2,204.2 L195.0,201.9 L196.9,199.6 L199.1,197.3 L201.5,195.0 L204.1,192.7 L207.0,190.4 L210.2,188.3 L213.6,186.3 L217.3,184.5 L221.1,182.7 L225.1,181.1 L229.2,179.7 L233.4,178.4 L237.7,177.4 L242.0,176.5 L246.3,175.7 L250.6,175.2 L254.9,174.9 L259.0,174.8 L263.1,174.9 L267.0,175.3 L270.7,175.8 L274.3,176.5 L277.7,177.3 L280.8,178.2 L283.8,179.1 L286.7,180.1 L289.3,181.1 L291.8,182.2 L294.1,183.2 L296.2,184.3 L298.2,185.3 L300.1,186.4 M184.1,221.1 L184.8,219.3 L185.6,217.4 L186.5,215.4 L187.5,213.4 L188.7,211.2 L190.0,209.0 L191.5,206.7 L193.2,204.3 L195.1,201.8 L197.3,199.4 L199.9,197.1 L202.8,194.8 L205.9,192.5 L209.4,190.4 L213.1,188.4 L217.0,186.5 L221.0,184.7 L225.3,183.1 L229.7,181.6 L234.1,180.3 L238.6,179.1 L243.2,178.1 L247.8,177.3 L252.3,176.7 L256.8,176.3 L261.2,176.1 L265.4,176.1 L269.5,176.3 L273.5,176.7 L277.2,177.3 L280.7,178.1 L284.0,179.2 L287.0,180.2 L289.8,181.4 L292.5,182.5 L294.9,183.6 L297.2,184.8 L299.3,185.9 L301.3,187.0 L303.1,188.1 M183.0,224.2 L183.6,222.5 L184.2,220.6 L185.0,218.6 L186.0,216.5 L187.0,214.3 L188.2,212.0 L189.7,209.5 L191.4,207.1 L193.5,204.7 L195.9,202.3 L198.7,200.0 L201.9,197.7 L205.3,195.5 L209.0,193.4 L212.9,191.3 L217.0,189.4 L221.4,187.6 L225.9,185.9 L230.5,184.4 L235.2,183.0 L240.0,181.8 L244.7,180.7 L249.5,179.8 L254.3,179.1 L259.0,178.6 L263.6,178.3 L268.0,178.1 L272.3,178.2 L276.4,178.5 L280.3,178.9 L284.0,179.6 L287.4,180.5 L290.5,181.6 L293.3,182.9 L295.9,184.1 L298.3,185.4 L300.5,186.6 L302.6,187.8 L304.5,189.0 L306.2,190.1 M181.9,227.7 L182.4,225.9 L183.0,224.1 L183.7,222.1 L184.5,219.9 L185.4,217.7 L186.6,215.4 L188.1,213.0 L190.0,210.6 L192.4,208.3 L195.0,206.0 L198.1,203.7 L201.4,201.4 L205.1,199.3 L209.0,197.2 L213.1,195.1 L217.5,193.2 L222.1,191.4 L226.8,189.7 L231.7,188.1 L236.6,186.6 L241.6,185.3 L246.6,184.2 L251.6,183.2 L256.6,182.4 L261.4,181.8 L266.2,181.3 L270.9,181.1 L275.3,181.0 L279.6,181.1 L283.6,181.4 L287.4,182.0 L290.9,182.7 L294.2,183.6 L297.1,184.8 L299.6,186.1 L302.0,187.4 L304.1,188.7 L306.0,190.0 L307.8,191.2 L309.4,192.4 M181.1,231.5 L181.4,229.7 L181.9,227.9 L182.4,225.9 L183.1,223.8 L184.0,221.6 L185.3,219.4 L187.0,217.1 L189.2,214.9 L191.7,212.6 L194.6,210.4 L197.8,208.1 L201.4,205.9 L205.3,203.8 L209.4,201.7 L213.8,199.7 L218.4,197.8 L223.2,195.9 L228.1,194.2 L233.2,192.6 L238.3,191.1 L243.5,189.7 L248.7,188.5 L253.9,187.4 L259.1,186.5 L264.1,185.8 L269.1,185.2 L273.9,184.8 L278.5,184.6 L282.9,184.6 L287.1,184.8 L291.0,185.1 L294.6,185.7 L297.9,186.4 L300.9,187.4 L303.5,188.5 L305.8,189.9 L307.8,191.2 L309.6,192.5 L311.3,193.8 L312.8,195.0 M180.4,235.5 L180.6,233.9 L180.9,232.1 L181.3,230.2 L182.0,228.2 L183.0,226.1 L184.5,224.0 L186.5,221.9 L188.8,219.7 L191.5,217.6 L194.6,215.4 L198.0,213.3 L201.8,211.1 L205.9,209.0 L210.2,207.0 L214.8,205.0 L219.6,203.1 L224.6,201.2 L229.8,199.5 L235.0,197.8 L240.3,196.3 L245.7,194.9 L251.1,193.6 L256.5,192.4 L261.8,191.4 L267.0,190.6 L272.1,189.9 L277.0,189.3 L281.8,189.0 L286.3,188.8 L290.6,188.8 L294.6,189.0 L298.3,189.4 L301.7,190.0 L304.8,190.7 L307.5,191.7 L309.8,192.8 L311.7,194.1 L313.4,195.5 L314.8,196.7 L316.2,197.9 M179.9,239.9 L180.0,238.4 L180.2,236.7 L180.5,234.9 L181.3,233.1 L182.6,231.2 L184.2,229.2 L186.4,227.2 L188.9,225.2 L191.8,223.1 L195.1,221.1 L198.7,219.0 L202.7,217.0 L206.9,214.9 L211.5,212.9 L216.2,211.0 L221.2,209.1 L226.4,207.2 L231.7,205.5 L237.1,203.8 L242.6,202.2 L248.2,200.7 L253.7,199.4 L259.3,198.1 L264.7,197.0 L270.1,196.1 L275.3,195.3 L280.4,194.6 L285.2,194.1 L289.9,193.8 L294.2,193.6 L298.3,193.7 L302.1,193.8 L305.6,194.2 L308.6,194.8 L311.4,195.5 L313.7,196.4 L315.6,197.5 L317.2,198.8 L318.5,200.0 L319.7,201.2 M179.6,244.5 L179.7,243.2 L179.8,241.7 L180.3,240.1 L181.2,238.4 L182.6,236.7 L184.4,234.9 L186.7,233.0 L189.4,231.1 L192.5,229.2 L195.9,227.3 L199.8,225.3 L203.9,223.4 L208.3,221.4 L213.0,219.4 L218.0,217.5 L223.1,215.7 L228.5,213.8 L234.0,212.1 L239.5,210.4 L245.2,208.8 L250.9,207.2 L256.6,205.8 L262.2,204.5 L267.8,203.3 L273.3,202.2 L278.6,201.3 L283.8,200.5 L288.7,199.9 L293.4,199.4 L297.9,199.1 L302.0,198.9 L305.9,198.9 L309.3,199.1 L312.5,199.5 L315.2,200.0 L317.6,200.7 L319.5,201.5 L321.0,202.6 L322.1,203.7 L323.1,204.8 M179.7,249.4 L179.7,248.3 L179.8,247.0 L180.5,245.6 L181.6,244.1 L183.1,242.6 L185.1,241.0 L187.5,239.3 L190.4,237.5 L193.6,235.8 L197.2,233.9 L201.2,232.1 L205.5,230.2 L210.1,228.3 L215.0,226.5 L220.1,224.6 L225.4,222.8 L230.8,221.0 L236.5,219.2 L242.2,217.5 L247.9,215.8 L253.8,214.3 L259.6,212.8 L265.3,211.4 L271.0,210.1 L276.6,209.0 L282.0,207.9 L287.2,207.0 L292.2,206.2 L297.0,205.6 L301.5,205.1 L305.7,204.7 L309.5,204.6 L313.1,204.5 L316.2,204.7 L318.9,205.0 L321.3,205.5 L323.2,206.1 L324.7,206.9 L325.7,207.8 L326.5,208.8 M180.2,254.6 L180.1,253.6 L180.4,252.5 L181.2,251.4 L182.4,250.1 L184.1,248.8 L186.2,247.4 L188.8,245.9 L191.8,244.3 L195.2,242.6 L198.9,241.0 L203.0,239.2 L207.5,237.5 L212.2,235.7 L217.2,233.9 L222.4,232.1 L227.9,230.3 L233.4,228.5 L239.2,226.8 L245.0,225.1 L250.9,223.4 L256.8,221.8 L262.7,220.3 L268.5,218.8 L274.3,217.4 L279.9,216.2 L285.4,215.0 L290.7,214.0 L295.7,213.0 L300.5,212.3 L305.1,211.6 L309.3,211.1 L313.1,210.7 L316.7,210.5 L319.8,210.4 L322.5,210.5 L324.8,210.7 L326.7,211.1 L328.1,211.7 L329.1,212.4 L329.7,213.2 M181.0,259.9 L181.0,259.1 L181.4,258.3 L182.3,257.4 L183.7,256.4 L185.5,255.2 L187.8,254.0 L190.5,252.7 L193.6,251.3 L197.1,249.8 L201.0,248.3 L205.2,246.7 L209.8,245.0 L214.6,243.3 L219.7,241.6 L225.0,239.9 L230.6,238.2 L236.3,236.4 L242.1,234.7 L248.0,233.0 L254.0,231.3 L259.9,229.7 L265.9,228.1 L271.8,226.6 L277.6,225.1 L283.3,223.8 L288.8,222.5 L294.1,221.3 L299.2,220.3 L304.0,219.3 L308.5,218.5 L312.7,217.8 L316.6,217.2 L320.1,216.8 L323.2,216.5 L325.9,216.4 L328.2,216.4 L330.0,216.5 L331.4,216.8 L332.3,217.3 L332.8,217.9 M182.2,265.3 L182.3,264.8 L182.9,264.2 L183.9,263.5 L185.4,262.7 L187.3,261.8 L189.7,260.8 L192.5,259.6 L195.8,258.4 L199.4,257.1 L203.4,255.7 L207.7,254.3 L212.3,252.8 L217.3,251.2 L222.5,249.6 L227.9,247.9 L233.5,246.2 L239.3,244.6 L245.1,242.9 L251.1,241.2 L257.1,239.5 L263.2,237.8 L269.2,236.2 L275.1,234.6 L280.9,233.1 L286.6,231.7 L292.1,230.3 L297.5,229.0 L302.5,227.8 L307.4,226.7 L311.9,225.7 L316.1,224.8 L319.9,224.1 L323.3,223.4 L326.4,222.9 L329.0,222.6 L331.3,222.3 L333.0,222.2 L334.3,222.3 L335.2,222.5 L335.6,222.8 M183.9,270.7 L184.1,270.5 L184.8,270.1 L185.9,269.7 L187.5,269.1 L189.5,268.4 L192.0,267.6 L194.9,266.7 L198.3,265.7 L202.0,264.5 L206.0,263.3 L210.5,262.0 L215.2,260.6 L220.2,259.2 L225.4,257.6 L230.9,256.1 L236.6,254.5 L242.4,252.8 L248.3,251.2 L254.3,249.5 L260.4,247.8 L266.4,246.1 L272.4,244.5 L278.4,242.9 L284.2,241.3 L289.9,239.8 L295.4,238.3 L300.7,236.9 L305.8,235.5 L310.5,234.3 L315.0,233.1 L319.2,232.1 L322.9,231.1 L326.3,230.3 L329.3,229.6 L331.9,229.0 L334.1,228.5 L335.7,228.2 L337.0,228.0 L337.7,227.9 L338.0,228.0 M186.0,276.0 L186.3,276.1 L187.0,276.0 L188.3,275.8 L189.9,275.5 L192.1,275.0 L194.7,274.4 L197.7,273.7 L201.1,272.9 L204.8,271.9 L209.0,270.9 L213.5,269.7 L218.2,268.5 L223.3,267.1 L228.6,265.7 L234.1,264.2 L239.8,262.7 L245.6,261.1 L251.6,259.5 L257.6,257.9 L263.6,256.2 L269.7,254.5 L275.7,252.8 L281.6,251.2 L287.4,249.5 L293.1,247.9 L298.6,246.4 L303.8,244.8 L308.8,243.4 L313.5,242.0 L318.0,240.7 L322.0,239.5 L325.7,238.3 L329.1,237.3 L332.0,236.4 L334.5,235.6 L336.5,234.9 L338.1,234.3 L339.2,233.9 L339.9,233.5 L340.1,233.3 M188.4,281.2 L188.8,281.5 L189.7,281.7 L191.0,281.8 L192.7,281.7 L195.0,281.4 L197.6,281.1 L200.7,280.6 L204.1,279.9 L207.9,279.2 L212.1,278.3 L216.6,277.3 L221.5,276.2 L226.5,275.0 L231.9,273.7 L237.4,272.3 L243.1,270.9 L248.9,269.4 L254.8,267.8 L260.8,266.2 L266.9,264.5 L272.9,262.8 L278.9,261.1 L284.7,259.4 L290.5,257.8 L296.1,256.1 L301.5,254.4 L306.7,252.8 L311.7,251.2 L316.3,249.7 L320.6,248.3 L324.6,246.9 L328.2,245.6 L331.5,244.4 L334.3,243.2 L336.7,242.2 L338.6,241.3 L340.1,240.5 L341.1,239.8 L341.7,239.2 L341.8,238.7 M191.2,286.1 L191.7,286.7 L192.6,287.2 L194.0,287.5 L195.8,287.6 L198.1,287.6 L200.8,287.5 L203.9,287.2 L207.4,286.8 L211.3,286.2 L215.5,285.5 L220.0,284.7 L224.8,283.7 L229.9,282.7 L235.2,281.5 L240.7,280.2 L246.4,278.9 L252.2,277.4 L258.1,275.9 L264.1,274.3 L270.0,272.7 L276.0,271.0 L281.9,269.3 L287.7,267.6 L293.4,265.8 L299.0,264.1 L304.3,262.4 L309.4,260.7 L314.2,259.0 L318.8,257.3 L323.0,255.7 L326.9,254.2 L330.4,252.7 L333.5,251.3 L336.2,250.0 L338.5,248.8 L340.3,247.6 L341.7,246.6 L342.6,245.7 L343.0,244.9 L343.0,244.1 M194.3,290.8 L194.9,291.6 L195.9,292.3 L197.3,292.9 L199.2,293.3 L201.5,293.5 L204.2,293.6 L207.3,293.5 L210.9,293.3 L214.7,292.9 L218.9,292.4 L223.5,291.7 L228.3,291.0 L233.3,290.0 L238.6,289.0 L244.1,287.8 L249.7,286.6 L255.5,285.2 L261.3,283.7 L267.2,282.2 L273.1,280.6 L279.0,278.9 L284.8,277.2 L290.6,275.5 L296.1,273.7 L301.6,271.9 L306.8,270.1 L311.8,268.3 L316.5,266.5 L321.0,264.8 L325.1,263.0 L328.8,261.4 L332.2,259.7 L335.2,258.1 L337.8,256.6 L339.9,255.2 L341.6,253.9 L342.8,252.6 L343.6,251.5 L343.9,250.4 L343.8,249.4 M197.5,295.2 L198.3,296.2 L199.3,297.1 L200.8,297.9 L202.7,298.5 L205.1,299.0 L207.8,299.3 L210.9,299.5 L214.5,299.4 L218.3,299.3 L222.5,298.9 L227.0,298.4 L231.8,297.8 L236.8,297.0 L242.0,296.1 L247.4,295.0 L253.0,293.9 L258.7,292.6 L264.4,291.2 L270.2,289.7 L276.1,288.2 L281.8,286.5 L287.5,284.8 L293.2,283.0 L298.6,281.2 L303.9,279.4 L309.0,277.5 L313.9,275.7 L318.5,273.8 L322.8,271.9 L326.8,270.1 L330.4,268.2 L333.6,266.5 L336.5,264.7 L338.9,263.0 L340.9,261.4 L342.4,259.9 L343.5,258.4 L344.2,257.0 L344.3,255.7 L344.3,254.6 M200.9,299.2 L201.9,300.3 L203.0,301.4 L204.5,302.5 L206.4,303.3 L208.8,304.0 L211.5,304.5 L214.7,304.9 L218.1,305.1 L222.0,305.1 L226.1,304.9 L230.6,304.6 L235.3,304.1 L240.2,303.5 L245.4,302.7 L250.7,301.8 L256.2,300.7 L261.8,299.5 L267.4,298.2 L273.1,296.8 L278.8,295.2 L284.5,293.6 L290.0,291.9 L295.5,290.2 L300.9,288.3 L306.0,286.5 L311.0,284.6 L315.7,282.6 L320.1,280.6 L324.2,278.7 L328.1,276.7 L331.5,274.8 L334.6,272.9 L337.3,271.0 L339.6,269.1 L341.4,267.3 L342.8,265.6 L343.7,263.9 L344.2,262.3 L344.3,260.8 L344.4,259.5 M204.3,302.8 L205.5,304.0 L206.8,305.2 L208.4,306.5 L210.3,307.6 L212.6,308.5 L215.4,309.2 L218.4,309.8 L221.9,310.2 L225.7,310.3 L229.8,310.4 L234.1,310.2 L238.8,309.9 L243.6,309.4 L248.7,308.7 L253.9,307.9 L259.3,307.0 L264.7,305.9 L270.3,304.6 L275.8,303.3 L281.4,301.8 L286.9,300.2 L292.3,298.5 L297.6,296.8 L302.8,294.9 L307.8,293.0 L312.5,291.1 L317.1,289.1 L321.3,287.0 L325.3,285.0 L328.9,282.9 L332.2,280.9 L335.1,278.8 L337.6,276.8 L339.8,274.8 L341.4,272.8 L342.7,270.9 L343.5,269.1 L343.8,267.3 L344.0,265.6 L344.1,264.1 M207.8,306.1 L209.2,307.3 L210.6,308.5 L212.3,309.9 L214.2,311.2 L216.5,312.3 L219.2,313.3 L222.3,314.0 L225.7,314.6 L229.4,315.0 L233.4,315.2 L237.7,315.2 L242.2,315.0 L247.0,314.7 L251.9,314.1 L257.0,313.4 L262.2,312.6 L267.5,311.6 L272.9,310.4 L278.3,309.1 L283.7,307.7 L289.0,306.2 L294.2,304.5 L299.4,302.8 L304.4,300.9 L309.2,299.0 L313.8,297.0 L318.1,295.0 L322.2,292.9 L326.0,290.7 L329.4,288.6 L332.5,286.4 L335.2,284.3 L337.5,282.1 L339.5,280.0 L341.0,277.9 L342.0,275.8 L342.7,273.8 L343.1,271.9 L343.4,270.1 L343.6,268.5 M211.2,309.0 L212.7,310.2 L214.4,311.5 L216.2,312.8 L218.2,314.1 L220.5,315.5 L223.1,316.6 L226.1,317.6 L229.4,318.3 L233.0,318.9 L236.9,319.2 L241.1,319.4 L245.5,319.4 L250.1,319.2 L254.9,318.8 L259.9,318.2 L264.9,317.5 L270.1,316.6 L275.3,315.5 L280.5,314.3 L285.7,312.9 L290.8,311.4 L295.9,309.8 L300.8,308.1 L305.6,306.2 L310.2,304.3 L314.6,302.3 L318.7,300.2 L322.6,298.1 L326.2,295.9 L329.4,293.6 L332.3,291.4 L334.8,289.1 L337.0,286.9 L338.7,284.6 L340.0,282.4 L340.9,280.2 L341.6,278.1 L342.1,276.1 L342.6,274.3 L342.9,272.5 M214.6,311.6 L216.2,312.8 L218.0,314.0 L219.9,315.3 L222.0,316.6 L224.4,317.9 L226.9,319.2 L229.8,320.4 L233.1,321.3 L236.6,322.0 L240.4,322.6 L244.4,322.9 L248.7,323.0 L253.1,322.9 L257.8,322.7 L262.6,322.2 L267.4,321.6 L272.4,320.8 L277.4,319.8 L282.4,318.7 L287.4,317.4 L292.3,315.9 L297.2,314.3 L301.9,312.6 L306.5,310.8 L310.9,308.9 L315.0,306.8 L318.9,304.7 L322.6,302.6 L325.9,300.3 L329.0,298.0 L331.6,295.7 L334.0,293.4 L335.9,291.0 L337.4,288.6 L338.6,286.3 L339.5,284.1 L340.3,281.9 L341.0,279.9 L341.6,278.1 L342.1,276.3 M217.8,313.9 L219.5,315.0 L221.4,316.2 L223.5,317.4 L225.7,318.6 L228.1,319.9 L230.7,321.1 L233.5,322.4 L236.6,323.5 L240.0,324.4 L243.7,325.1 L247.6,325.5 L251.7,325.8 L256.0,325.9 L260.4,325.7 L265.0,325.4 L269.7,324.9 L274.5,324.2 L279.3,323.3 L284.0,322.2 L288.8,321.0 L293.5,319.6 L298.1,318.1 L302.6,316.4 L307.0,314.6 L311.1,312.7 L315.0,310.6 L318.7,308.5 L322.1,306.3 L325.3,304.0 L328.1,301.7 L330.5,299.3 L332.6,296.9 L334.3,294.5 L335.8,292.0 L337.0,289.7 L338.0,287.5 L339.0,285.4 L339.8,283.4 L340.4,281.5 L341.0,279.8 M220.9,315.9 L222.7,317.0 L224.7,318.1 L226.8,319.2 L229.1,320.4 L231.5,321.5 L234.2,322.6 L237.0,323.8 L240.0,324.8 L243.3,325.9 L246.8,326.7 L250.5,327.3 L254.5,327.7 L258.6,327.9 L262.8,327.9 L267.2,327.7 L271.7,327.3 L276.2,326.7 L280.8,325.9 L285.4,324.9 L289.9,323.7 L294.3,322.4 L298.7,320.9 L303.0,319.3 L307.0,317.5 L310.9,315.6 L314.6,313.6 L318.1,311.5 L321.2,309.2 L324.1,306.9 L326.7,304.6 L328.9,302.2 L330.8,299.7 L332.5,297.3 L334.0,295.0 L335.3,292.8 L336.5,290.6 L337.5,288.6 L338.4,286.6 L339.2,284.7 L339.9,282.9 M223.9,317.6 L225.8,318.7 L227.8,319.7 L229.9,320.8 L232.2,321.8 L234.7,322.9 L237.3,323.9 L240.2,324.9 L243.2,325.8 L246.3,326.7 L249.7,327.5 L253.3,328.2 L257.0,328.7 L260.9,329.1 L265.0,329.2 L269.1,329.1 L273.4,328.8 L277.7,328.3 L282.0,327.5 L286.3,326.6 L290.6,325.6 L294.8,324.3 L298.9,322.9 L302.9,321.3 L306.7,319.5 L310.4,317.7 L313.8,315.7 L317.0,313.6 L319.9,311.3 L322.5,309.0 L324.9,306.7 L327.1,304.4 L329.0,302.1 L330.8,299.8 L332.3,297.6 L333.7,295.5 L335.0,293.4 L336.1,291.4 L337.1,289.5 L338.0,287.6 L338.8,285.8 M226.7,319.2 L228.6,320.1 L230.7,321.1 L232.9,322.1 L235.2,323.1 L237.6,324.0 L240.3,324.9 L243.0,325.8 L246.0,326.6 L249.1,327.4 L252.3,328.0 L255.7,328.6 L259.3,329.1 L263.0,329.4 L266.8,329.5 L270.8,329.5 L274.8,329.3 L278.8,328.9 L282.9,328.3 L286.9,327.5 L290.9,326.5 L294.9,325.3 L298.7,323.9 L302.4,322.4 L306.0,320.7 L309.4,318.8 L312.5,316.9 L315.5,314.8 L318.3,312.7 L320.8,310.6 L323.2,308.4 L325.3,306.3 L327.3,304.1 L329.1,302.0 L330.7,299.9 L332.2,297.8 L333.5,295.8 L334.7,293.9 L335.8,292.0 L336.7,290.2 L337.6,288.5 M188.7,211.1 L187.8,212.8 L186.8,214.6 L185.9,216.6 L185.0,218.7 L184.1,220.9 L183.2,223.3 L182.4,225.9 L181.7,228.7 L181.0,231.6 L180.5,234.7 L180.0,238.0 L179.8,241.4 L179.7,245.1 L179.9,248.9 L180.3,252.8 L181.0,256.8 L181.8,260.8 L182.9,264.9 L184.2,269.0 L185.7,273.1 L187.4,277.1 L189.2,281.1 L191.2,285.0 L193.4,288.7 L195.7,292.2 L198.1,295.6 L200.6,298.7 L203.2,301.6 L205.8,304.2 L208.5,306.7 L211.1,308.9 L213.7,310.9 L216.2,312.8 L218.7,314.4 L221.0,316.0 L223.3,317.3 L225.6,318.6 L227.7,319.7 L229.7,320.7 L231.7,321.6 M190.9,207.6 L189.9,209.2 L188.8,210.9 L187.8,212.8 L186.7,214.9 L185.7,217.1 L184.7,219.5 L183.7,222.0 L182.8,224.8 L181.9,227.9 L181.4,231.1 L181.0,234.6 L180.9,238.3 L181.1,242.2 L181.5,246.3 L182.1,250.5 L182.9,254.8 L183.9,259.2 L185.2,263.6 L186.6,268.0 L188.2,272.4 L190.0,276.8 L192.0,281.1 L194.1,285.2 L196.3,289.3 L198.7,293.2 L201.1,296.8 L203.7,300.3 L206.3,303.5 L209.0,306.5 L211.7,309.1 L214.5,311.5 L217.2,313.5 L219.9,315.3 L222.5,316.9 L225.0,318.3 L227.4,319.5 L229.7,320.7 L231.9,321.7 L234.0,322.6 L235.9,323.3 M193.5,203.8 L192.4,205.3 L191.3,206.9 L190.2,208.7 L189.0,210.7 L187.8,212.8 L186.6,215.1 L185.5,217.7 L184.7,220.6 L184.1,223.8 L183.8,227.3 L183.6,231.0 L183.8,235.0 L184.1,239.1 L184.7,243.4 L185.5,247.9 L186.5,252.5 L187.7,257.1 L189.1,261.8 L190.7,266.5 L192.4,271.3 L194.3,275.9 L196.4,280.5 L198.6,285.0 L200.9,289.4 L203.3,293.5 L205.7,297.5 L208.3,301.3 L210.9,304.8 L213.6,308.1 L216.3,311.0 L219.0,313.6 L221.7,315.9 L224.4,317.8 L227.1,319.4 L229.7,320.7 L232.2,321.8 L234.5,322.8 L236.7,323.6 L238.7,324.4 L240.7,325.0 M196.7,199.9 L195.6,201.3 L194.4,202.7 L193.1,204.4 L191.8,206.2 L190.6,208.2 L189.5,210.6 L188.7,213.3 L188.2,216.4 L187.8,219.7 L187.7,223.4 L187.8,227.3 L188.2,231.4 L188.8,235.8 L189.5,240.3 L190.5,245.0 L191.7,249.8 L193.1,254.7 L194.6,259.7 L196.3,264.7 L198.2,269.7 L200.2,274.6 L202.3,279.5 L204.6,284.3 L206.9,288.9 L209.3,293.4 L211.8,297.6 L214.4,301.7 L217.0,305.5 L219.6,309.0 L222.3,312.2 L224.9,315.1 L227.5,317.6 L230.1,319.8 L232.7,321.6 L235.2,323.0 L237.6,324.0 L239.9,324.8 L242.1,325.5 L244.1,326.1 L246.0,326.6 M200.5,195.9 L199.3,197.1 L198.1,198.4 L196.8,199.8 L195.6,201.5 L194.6,203.6 L193.9,206.1 L193.3,208.9 L193.0,212.1 L193.0,215.6 L193.1,219.3 L193.5,223.4 L194.1,227.7 L194.9,232.3 L195.8,237.0 L197.0,241.9 L198.4,246.9 L199.9,252.0 L201.6,257.2 L203.4,262.4 L205.4,267.7 L207.5,272.9 L209.6,278.0 L211.9,283.0 L214.3,287.9 L216.7,292.6 L219.2,297.2 L221.8,301.5 L224.3,305.5 L226.9,309.3 L229.4,312.7 L232.0,315.9 L234.5,318.6 L236.9,321.0 L239.4,323.1 L241.7,324.7 L244.0,325.9 L246.1,326.6 L248.2,327.2 L250.1,327.6 L251.8,327.9 M204.9,191.9 L203.8,192.9 L202.6,193.9 L201.5,195.2 L200.6,197.0 L200.0,199.1 L199.5,201.7 L199.3,204.6 L199.3,207.8 L199.5,211.4 L199.9,215.3 L200.5,219.5 L201.3,224.0 L202.3,228.6 L203.5,233.5 L204.8,238.6 L206.3,243.8 L208.0,249.1 L209.8,254.5 L211.8,259.9 L213.8,265.3 L216.0,270.7 L218.2,276.1 L220.5,281.3 L222.9,286.4 L225.3,291.4 L227.8,296.1 L230.3,300.7 L232.8,304.9 L235.2,308.9 L237.7,312.6 L240.1,316.0 L242.5,318.9 L244.8,321.6 L247.0,323.8 L249.1,325.6 L251.2,327.0 L253.1,328.0 L254.9,328.5 L256.6,328.7 L258.2,328.9 M210.1,188.0 L209.1,188.7 L208.1,189.7 L207.3,191.0 L206.8,192.7 L206.4,194.9 L206.3,197.5 L206.3,200.4 L206.6,203.7 L207.1,207.4 L207.8,211.4 L208.6,215.7 L209.6,220.2 L210.9,225.0 L212.2,230.0 L213.8,235.2 L215.5,240.5 L217.3,246.0 L219.2,251.5 L221.2,257.1 L223.4,262.7 L225.6,268.3 L227.8,273.8 L230.2,279.2 L232.5,284.5 L234.9,289.6 L237.4,294.6 L239.8,299.3 L242.1,303.8 L244.5,308.0 L246.8,311.8 L249.1,315.4 L251.3,318.6 L253.4,321.4 L255.4,323.8 L257.3,325.8 L259.1,327.4 L260.8,328.5 L262.3,329.2 L263.8,329.4 L265.1,329.5 M215.9,184.4 L215.1,184.9 L214.5,185.8 L214.1,187.1 L213.8,188.8 L213.8,191.0 L214.0,193.6 L214.4,196.5 L214.9,199.9 L215.7,203.6 L216.6,207.6 L217.7,211.9 L219.0,216.5 L220.4,221.4 L222.0,226.5 L223.7,231.8 L225.5,237.2 L227.4,242.7 L229.4,248.4 L231.6,254.1 L233.8,259.8 L236.0,265.5 L238.3,271.2 L240.6,276.7 L243.0,282.2 L245.3,287.5 L247.7,292.6 L250.0,297.5 L252.2,302.1 L254.4,306.4 L256.6,310.5 L258.7,314.2 L260.7,317.5 L262.6,320.5 L264.3,323.1 L266.0,325.2 L267.5,327.0 L268.9,328.2 L270.2,329.1 L271.3,329.5 L272.3,329.5 M222.4,181.2 L221.9,181.6 L221.6,182.4 L221.6,183.7 L221.7,185.4 L222.0,187.5 L222.5,190.0 L223.2,193.0 L224.0,196.3 L225.0,200.0 L226.2,204.0 L227.5,208.4 L229.0,213.0 L230.6,217.9 L232.4,223.0 L234.2,228.3 L236.2,233.8 L238.2,239.5 L240.4,245.2 L242.6,251.0 L244.8,256.8 L247.1,262.6 L249.4,268.3 L251.7,274.0 L254.0,279.5 L256.2,284.9 L258.5,290.1 L260.7,295.1 L262.8,299.9 L264.9,304.4 L266.8,308.5 L268.7,312.4 L270.5,315.9 L272.1,319.0 L273.7,321.7 L275.1,324.0 L276.3,325.8 L277.4,327.3 L278.3,328.2 L279.1,328.8 L279.8,328.8 M229.4,178.5 L229.3,178.8 L229.4,179.6 L229.6,180.7 L230.1,182.4 L230.7,184.4 L231.5,186.9 L232.5,189.8 L233.6,193.1 L234.9,196.8 L236.3,200.8 L237.9,205.1 L239.6,209.7 L241.4,214.6 L243.3,219.7 L245.3,225.1 L247.4,230.6 L249.5,236.2 L251.7,241.9 L254.0,247.8 L256.2,253.6 L258.5,259.4 L260.8,265.2 L263.0,271.0 L265.3,276.6 L267.5,282.1 L269.6,287.4 L271.6,292.4 L273.6,297.3 L275.5,301.8 L277.3,306.1 L278.9,310.0 L280.5,313.6 L281.9,316.8 L283.1,319.7 L284.2,322.1 L285.2,324.0 L286.0,325.6 L286.6,326.7 L287.0,327.3 L287.3,327.5 M236.7,176.5 L237.0,176.7 L237.4,177.3 L238.0,178.4 L238.8,180.0 L239.8,181.9 L240.9,184.3 L242.1,187.2 L243.5,190.4 L245.1,194.0 L246.7,197.9 L248.5,202.2 L250.4,206.7 L252.4,211.6 L254.4,216.6 L256.5,221.9 L258.7,227.4 L261.0,233.0 L263.2,238.8 L265.5,244.6 L267.8,250.4 L270.0,256.2 L272.3,262.1 L274.5,267.8 L276.6,273.4 L278.7,278.9 L280.7,284.3 L282.6,289.4 L284.4,294.3 L286.1,298.9 L287.7,303.2 L289.1,307.2 L290.4,310.9 L291.5,314.2 L292.5,317.1 L293.3,319.6 L293.9,321.6 L294.4,323.3 L294.6,324.4 L294.7,325.2 L294.6,325.5 M244.2,175.2 L244.9,175.2 L245.7,175.8 L246.6,176.7 L247.7,178.2 L248.9,180.0 L250.3,182.3 L251.9,185.0 L253.5,188.1 L255.3,191.6 L257.2,195.5 L259.1,199.6 L261.2,204.1 L263.3,208.9 L265.5,213.9 L267.8,219.1 L270.0,224.5 L272.3,230.0 L274.6,235.7 L276.9,241.4 L279.2,247.2 L281.4,253.0 L283.6,258.8 L285.8,264.5 L287.8,270.2 L289.8,275.7 L291.6,281.0 L293.4,286.1 L295.0,291.0 L296.5,295.6 L297.8,300.0 L299.0,304.0 L300.0,307.7 L300.8,311.0 L301.5,314.0 L302.0,316.5 L302.3,318.6 L302.4,320.3 L302.4,321.6 L302.1,322.4 L301.6,322.8 M251.7,174.5 L252.7,174.5 L253.8,174.9 L255.1,175.8 L256.5,177.0 L258.0,178.8 L259.7,180.9 L261.4,183.5 L263.3,186.5 L265.3,189.8 L267.4,193.5 L269.6,197.6 L271.8,201.9 L274.0,206.5 L276.3,211.4 L278.7,216.5 L281.0,221.8 L283.4,227.3 L285.7,232.8 L288.0,238.5 L290.2,244.2 L292.4,249.9 L294.6,255.6 L296.6,261.3 L298.5,266.8 L300.3,272.2 L302.0,277.5 L303.6,282.6 L305.0,287.5 L306.3,292.1 L307.4,296.4 L308.3,300.4 L309.1,304.1 L309.6,307.5 L310.0,310.4 L310.2,313.0 L310.2,315.2 L309.9,316.9 L309.5,318.2 L308.9,319.1 L308.1,319.6 M258.9,174.5 L260.2,174.6 L261.7,174.8 L263.2,175.5 L264.9,176.6 L266.7,178.2 L268.6,180.2 L270.6,182.6 L272.7,185.4 L274.9,188.6 L277.2,192.2 L279.5,196.0 L281.9,200.2 L284.2,204.7 L286.6,209.4 L289.1,214.4 L291.5,219.5 L293.8,224.8 L296.2,230.2 L298.4,235.7 L300.6,241.3 L302.8,246.9 L304.8,252.5 L306.7,258.0 L308.5,263.5 L310.2,268.8 L311.8,274.0 L313.1,279.0 L314.4,283.8 L315.4,288.3 L316.2,292.6 L316.9,296.6 L317.4,300.3 L317.7,303.6 L317.7,306.5 L317.6,309.1 L317.2,311.3 L316.7,313.0 L315.9,314.3 L314.9,315.3 L313.9,316.0 M265.8,175.1 L267.4,175.3 L269.1,175.5 L270.9,176.0 L272.8,177.0 L274.9,178.4 L277.0,180.2 L279.2,182.4 L281.5,185.1 L283.9,188.0 L286.3,191.4 L288.8,195.1 L291.2,199.1 L293.7,203.3 L296.2,207.9 L298.7,212.6 L301.1,217.6 L303.5,222.7 L305.8,227.9 L308.0,233.3 L310.2,238.7 L312.2,244.1 L314.2,249.5 L316.0,254.9 L317.7,260.2 L319.2,265.4 L320.5,270.5 L321.7,275.4 L322.7,280.0 L323.5,284.5 L324.1,288.7 L324.5,292.6 L324.7,296.2 L324.7,299.4 L324.5,302.3 L324.0,304.9 L323.4,307.0 L322.5,308.8 L321.4,310.1 L320.2,311.1 L319.1,312.1 M272.2,176.1 L273.9,176.4 L275.8,176.8 L277.9,177.4 L280.0,178.1 L282.3,179.3 L284.6,180.9 L287.1,183.0 L289.5,185.4 L292.0,188.1 L294.6,191.3 L297.1,194.7 L299.7,198.5 L302.2,202.5 L304.8,206.8 L307.3,211.4 L309.7,216.1 L312.1,221.0 L314.4,226.0 L316.5,231.1 L318.6,236.3 L320.6,241.6 L322.4,246.8 L324.1,252.0 L325.6,257.1 L327.0,262.1 L328.2,267.0 L329.1,271.7 L329.9,276.3 L330.5,280.6 L330.9,284.7 L331.0,288.4 L331.0,291.9 L330.7,295.1 L330.1,297.9 L329.4,300.4 L328.4,302.5 L327.2,304.2 L325.9,305.6 L324.7,306.9 L323.5,308.1 M278.0,177.4 L279.9,177.9 L281.9,178.5 L284.1,179.2 L286.4,180.0 L288.8,181.0 L291.3,182.4 L293.9,184.2 L296.5,186.4 L299.1,188.9 L301.7,191.8 L304.4,195.0 L307.0,198.5 L309.6,202.3 L312.2,206.4 L314.7,210.6 L317.1,215.1 L319.4,219.7 L321.7,224.5 L323.8,229.4 L325.8,234.3 L327.7,239.3 L329.4,244.3 L330.9,249.3 L332.3,254.2 L333.5,259.0 L334.5,263.7 L335.2,268.2 L335.8,272.6 L336.2,276.7 L336.3,280.6 L336.2,284.3 L335.8,287.6 L335.3,290.7 L334.5,293.4 L333.4,295.8 L332.2,297.8 L330.9,299.6 L329.6,301.3 L328.4,302.7 L327.3,304.1 M283.3,179.0 L285.3,179.6 L287.3,180.4 L289.5,181.2 L291.8,182.2 L294.3,183.3 L296.9,184.6 L299.6,186.2 L302.3,188.1 L305.0,190.4 L307.7,193.0 L310.4,195.9 L313.1,199.2 L315.7,202.7 L318.3,206.5 L320.7,210.5 L323.1,214.6 L325.4,219.0 L327.6,223.5 L329.7,228.1 L331.6,232.7 L333.3,237.5 L334.9,242.2 L336.3,246.9 L337.5,251.5 L338.5,256.1 L339.3,260.6 L339.9,264.9 L340.2,269.0 L340.4,273.0 L340.2,276.7 L339.9,280.2 L339.3,283.4 L338.5,286.3 L337.4,288.9 L336.2,291.2 L335.0,293.3 L333.8,295.3 L332.7,297.1 L331.6,298.7 L330.5,300.2 M288.1,180.7 L290.0,181.4 L292.1,182.3 L294.3,183.3 L296.6,184.5 L299.0,185.7 L301.5,187.1 L304.1,188.7 L306.8,190.5 L309.5,192.5 L312.3,194.9 L315.0,197.5 L317.7,200.5 L320.3,203.7 L322.9,207.2 L325.3,210.8 L327.7,214.7 L329.9,218.8 L332.0,222.9 L334.0,227.2 L335.8,231.6 L337.4,236.0 L338.8,240.4 L340.1,244.8 L341.1,249.2 L341.9,253.5 L342.5,257.7 L342.9,261.8 L343.1,265.7 L343.0,269.4 L342.6,272.9 L342.1,276.1 L341.2,279.2 L340.3,282.0 L339.3,284.5 L338.3,286.9 L337.3,289.1 L336.2,291.2 L335.2,293.1 L334.1,294.8 L333.1,296.4 M292.3,182.4 L294.3,183.3 L296.3,184.3 L298.4,185.4 L300.7,186.7 L303.0,188.0 L305.3,189.6 L307.8,191.2 L310.3,193.1 L312.9,195.1 L315.5,197.3 L318.2,199.8 L320.8,202.4 L323.4,205.3 L325.9,208.4 L328.3,211.8 L330.6,215.3 L332.8,219.0 L334.8,222.9 L336.6,226.9 L338.3,230.9 L339.8,235.0 L341.1,239.1 L342.2,243.2 L343.0,247.2 L343.7,251.2 L344.1,255.1 L344.3,258.9 L344.2,262.6 L344.0,266.0 L343.5,269.3 L343.0,272.4 L342.3,275.3 L341.6,278.1 L340.8,280.7 L339.9,283.1 L339.0,285.3 L338.1,287.4 L337.2,289.4 L336.2,291.2 L335.3,292.9" stroke="#0c2a60" stroke-width="0.75" fill="none" clip-path="url(#crv)"/>
<path d="M210,222 L225,257 L232,294 L236.8,304.5" stroke="#0c2a60" stroke-width="0.9" fill="none"/>
</svg>
<svg class="a" style="left:0;top:0" width="840" height="505" viewBox="0 0 840 505"><path d="M453.0,194.5 L453.0,194.5 L453.0,194.5 L453.0,194.5 L453.0,194.5 L492.3,194.5 L493.4,182.7 L493.9,182.7 L495.1,194.5 L542.3,194.5 L543.4,182.7 L543.9,182.7 L545.1,194.5 L592.3,194.5 L593.4,182.7 L593.9,182.7 L595.1,194.5 L642.3,194.5 L643.4,182.7 L643.9,182.7 L645.1,194.5 L692.3,194.5 L693.4,182.7 L693.9,182.7 L695.1,194.5 L735.0,194.5 M746.0,194.5 L776.6,194.5 L777.7,182.7 L778.2,182.7 L779.4,194.5 L826.8,194.5 L827.9,182.7 L828.4,182.7 L829.6,194.5 L836.0,194.5" stroke="#a4d4b8" stroke-width="1" fill="none"/><path d="M453.0,215.5 L453.0,215.5 L453.0,215.5 L453.0,215.5 L453.0,215.5 L453.0,215.5 L453.0,215.5 L453.0,215.5 L483.4,215.5 L483.4,210.2 L483.4,217.9 L483.8,214.3 L485.0,215.2 L489.7,212.9 L494.8,215.5 L533.4,215.5 L533.4,210.2 L533.4,217.9 L533.8,214.3 L535.0,215.2 L539.7,212.9 L544.8,215.5 L583.4,215.5 L583.4,210.2 L583.4,217.9 L583.8,214.3 L585.0,215.2 L589.7,212.9 L594.8,215.5 L633.4,215.5 L633.4,210.2 L633.4,217.9 L633.8,214.3 L635.0,215.2 L639.7,212.9 L644.8,215.5 L683.4,215.5 L683.4,210.2 L683.4,217.9 L683.8,214.3 L685.0,215.2 L689.7,212.9 L694.8,215.5 L733.4,215.5 L733.4,210.2 L733.4,217.9 L733.8,214.3 L735.0,215.2 L735.0,215.5 M746.0,215.5 L767.7,215.5 L767.7,210.2 L767.7,217.9 L768.1,214.3 L769.3,215.2 L774.0,212.9 L779.1,215.5 L817.9,215.5 L817.9,210.2 L817.9,217.9 L818.3,214.3 L819.5,215.2 L824.2,212.9 L829.3,215.5 L836.0,215.5" stroke="#a4d4b8" stroke-width="1" fill="none"/><path d="M453.0,236.5 L453.0,236.5 L453.0,236.5 L453.0,236.5 L453.0,236.5 L453.0,236.5 L453.0,236.5 L453.0,236.5 L453.0,236.5 L453.0,236.5 L453.0,236.5 L453.0,236.5 L453.0,236.5 L484.5,236.5 L485.5,235.0 L486.5,237.5 L487.2,236.5 L487.5,231.3 L487.9,239.7 L488.5,236.5 L491.6,236.5 L492.4,231.0 L492.9,232.5 L493.6,228.2 L495.4,236.5 L534.5,236.5 L535.5,235.0 L536.5,237.5 L537.2,236.5 L537.5,231.3 L537.9,239.7 L538.5,236.5 L541.6,236.5 L542.4,231.0 L542.9,232.5 L543.6,228.2 L545.4,236.5 L584.5,236.5 L585.5,235.0 L586.5,237.5 L587.2,236.5 L587.5,231.3 L587.9,239.7 L588.5,236.5 L591.6,236.5 L592.4,231.0 L592.9,232.5 L593.6,228.2 L595.4,236.5 L634.5,236.5 L635.5,235.0 L636.5,237.5 L637.2,236.5 L637.5,231.3 L637.9,239.7 L638.5,236.5 L641.6,236.5 L642.4,231.0 L642.9,232.5 L643.6,228.2 L645.4,236.5 L684.5,236.5 L685.5,235.0 L686.5,237.5 L687.2,236.5 L687.5,231.3 L687.9,239.7 L688.5,236.5 L691.6,236.5 L692.4,231.0 L692.9,232.5 L693.6,228.2 L695.4,236.5 L734.5,236.5 L735.0,236.5 M746.0,236.5 L768.8,236.5 L769.8,235.0 L770.8,237.5 L771.5,236.5 L771.8,231.3 L772.2,239.7 L772.8,236.5 L775.9,236.5 L776.7,231.0 L777.2,232.5 L777.9,228.2 L779.7,236.5 L819.0,236.5 L820.0,235.0 L821.0,237.5 L821.7,236.5 L822.0,231.3 L822.4,239.7 L823.0,236.5 L826.1,236.5 L826.9,231.0 L827.4,232.5 L828.1,228.2 L829.9,236.5 L836.0,236.5" stroke="#a4d4b8" stroke-width="1" fill="none"/><path d="M453.0,257.5 L453.0,257.5 L453.0,257.5 L453.0,257.5 L453.0,257.5 L453.0,257.5 L490.9,257.5 L491.4,252.5 L492.2,260.0 L493.6,250.0 L495.8,257.5 L540.9,257.5 L541.4,252.5 L542.2,260.0 L543.6,250.0 L545.8,257.5 L590.9,257.5 L591.4,252.5 L592.2,260.0 L593.6,250.0 L595.8,257.5 L640.9,257.5 L641.4,252.5 L642.2,260.0 L643.6,250.0 L645.8,257.5 L690.9,257.5 L691.4,252.5 L692.2,260.0 L693.6,250.0 L695.8,257.5 L735.0,257.5 M746.0,257.5 L775.2,257.5 L775.7,252.5 L776.5,260.0 L777.9,250.0 L780.1,257.5 L825.4,257.5 L825.9,252.5 L826.7,260.0 L828.1,250.0 L830.3,257.5 L836.0,257.5" stroke="#a4d4b8" stroke-width="1" fill="none"/><path d="M453.0,313.5 L453.0,313.5 L453.0,313.5 L453.0,313.5 L453.0,313.5 L453.0,313.5 L453.0,313.5 L453.0,313.5 L453.0,313.5 L453.0,313.5 L453.0,313.5 L453.0,313.5 L453.0,313.5 L453.0,313.5 L453.0,313.5 L453.0,313.5 L453.0,313.5 L453.3,312.5 L454.1,311.7 L455.0,311.0 L455.8,310.5 L456.6,310.2 L457.4,310.3 L458.2,310.6 L459.1,311.3 L459.9,312.2 L460.7,313.0 L461.5,313.5 L482.5,313.5 L483.1,312.8 L483.7,311.8 L484.3,310.9 L484.9,310.5 L485.4,310.8 L486.0,311.7 L486.6,312.8 L487.2,313.5 L492.5,313.5 L493.3,293.0 L493.6,293.0 L494.4,315.0 L495.3,313.5 L501.7,313.5 L502.5,313.1 L503.3,312.5 L504.1,311.7 L505.0,311.0 L505.8,310.5 L506.6,310.2 L507.4,310.3 L508.2,310.6 L509.1,311.3 L509.9,312.2 L510.7,313.0 L511.5,313.5 L532.5,313.5 L533.1,312.8 L533.7,311.8 L534.3,310.9 L534.9,310.5 L535.4,310.8 L536.0,311.7 L536.6,312.8 L537.2,313.5 L542.5,313.5 L543.3,293.0 L543.6,293.0 L544.4,315.0 L545.3,313.5 L551.7,313.5 L552.5,313.1 L553.3,312.5 L554.2,311.7 L555.0,311.0 L555.8,310.5 L556.6,310.2 L557.4,310.3 L558.2,310.6 L559.0,311.3 L559.9,312.2 L560.7,313.0 L561.5,313.5 L582.5,313.5 L583.1,312.8 L583.7,311.8 L584.3,310.9 L584.9,310.5 L585.4,310.8 L586.0,311.7 L586.6,312.8 L587.2,313.5 L592.5,313.5 L593.3,293.0 L593.6,293.0 L594.4,315.0 L595.3,313.5 L601.7,313.5 L602.5,313.1 L603.3,312.5 L604.2,311.7 L605.0,311.0 L605.8,310.5 L606.6,310.2 L607.4,310.3 L608.2,310.6 L609.0,311.3 L609.9,312.2 L610.7,313.0 L611.5,313.5 L632.5,313.5 L633.1,312.8 L633.7,311.8 L634.3,310.9 L634.9,310.5 L635.4,310.8 L636.0,311.7 L636.6,312.8 L637.2,313.5 L642.5,313.5 L643.3,293.0 L643.6,293.0 L644.4,315.0 L645.3,313.5 L651.7,313.5 L652.5,313.1 L653.3,312.5 L654.2,311.7 L655.0,311.0 L655.8,310.5 L656.6,310.2 L657.4,310.3 L658.2,310.6 L659.0,311.3 L659.9,312.2 L660.7,313.0 L661.5,313.5 L682.5,313.5 L683.1,312.8 L683.7,311.8 L684.3,310.9 L684.9,310.5 L685.4,310.8 L686.0,311.7 L686.6,312.8 L687.2,313.5 L692.5,313.5 L693.3,293.0 L693.6,293.0 L694.4,315.0 L695.3,313.5 L701.7,313.5 L702.5,313.1 L703.3,312.5 L704.2,311.7 L705.0,311.0 L705.8,310.5 L706.6,310.2 L707.4,310.3 L708.2,310.6 L709.0,311.3 L709.9,312.2 L710.7,313.0 L711.5,313.5 L732.5,313.5 L733.1,312.8 L733.7,311.8 L734.3,310.9 L734.9,310.5 L735.0,313.5 M746.0,313.5 L766.8,313.5 L767.4,312.8 L768.0,311.8 L768.6,310.9 L769.1,310.5 L769.7,310.8 L770.3,311.7 L770.9,312.8 L771.5,313.5 L776.8,313.5 L777.6,293.0 L777.9,293.0 L778.7,315.0 L779.6,313.5 L786.0,313.5 L786.8,313.1 L787.6,312.5 L788.5,311.7 L789.3,311.0 L790.1,310.5 L790.9,310.2 L791.7,310.3 L792.5,310.6 L793.3,311.3 L794.2,312.2 L795.0,313.0 L795.8,313.5 L817.0,313.5 L817.6,312.8 L818.2,311.8 L818.8,310.9 L819.4,310.5 L819.9,310.8 L820.5,311.7 L821.1,312.8 L821.7,313.5 L827.0,313.5 L827.8,293.0 L828.1,293.0 L828.9,315.0 L829.8,313.5 L836.0,313.5" stroke="#a4d4b8" stroke-width="1" fill="none"/><path d="M453.0,369.5 L453.0,369.5 L453.0,369.5 L453.0,369.5 L453.0,369.5 L453.0,369.5 L453.0,369.5 L453.0,369.5 L453.0,369.5 L453.0,369.5 L453.0,369.5 L453.0,369.5 L453.0,369.5 L453.0,369.5 L453.0,369.5 L453.0,369.5 L453.0,369.5 L453.0,369.5 L453.0,369.5 L453.0,369.5 L453.0,369.5 L453.0,369.5 L453.4,364.8 L454.2,363.8 L455.1,362.7 L455.9,361.6 L456.7,363.2 L457.5,365.1 L458.4,366.9 L459.2,368.4 L460.0,369.5 L483.0,369.5 L483.6,368.3 L484.2,366.9 L484.8,366.8 L485.3,367.5 L485.9,368.7 L486.5,369.5 L491.9,369.5 L492.6,368.0 L492.9,342.0 L493.2,342.0 L494.1,397.5 L494.5,397.5 L495.3,371.0 L498.5,369.5 L498.5,369.5 L499.3,369.0 L500.1,368.3 L501.0,367.5 L501.8,366.6 L502.6,365.7 L503.4,364.8 L504.2,363.8 L505.1,362.7 L505.9,361.6 L506.7,363.2 L507.5,365.1 L508.4,366.9 L509.2,368.4 L510.0,369.5 L533.0,369.5 L533.6,368.3 L534.2,366.9 L534.8,366.8 L535.3,367.5 L535.9,368.7 L536.5,369.5 L541.9,369.5 L542.6,368.0 L542.9,342.0 L543.2,342.0 L544.1,397.5 L544.5,397.5 L545.3,371.0 L548.5,369.5 L548.5,369.5 L549.3,369.0 L550.1,368.3 L551.0,367.5 L551.8,366.6 L552.6,365.7 L553.4,364.8 L554.2,363.8 L555.1,362.7 L555.9,361.6 L556.7,363.2 L557.5,365.1 L558.4,366.9 L559.2,368.4 L560.0,369.5 L583.0,369.5 L583.6,368.3 L584.2,366.9 L584.8,366.8 L585.3,367.5 L585.9,368.7 L586.5,369.5 L591.9,369.5 L592.6,368.0 L592.9,342.0 L593.2,342.0 L594.1,397.5 L594.5,397.5 L595.3,371.0 L598.5,369.5 L598.5,369.5 L599.3,369.0 L600.1,368.3 L601.0,367.5 L601.8,366.6 L602.6,365.7 L603.4,364.8 L604.2,363.8 L605.1,362.7 L605.9,361.6 L606.7,363.2 L607.5,365.1 L608.4,366.9 L609.2,368.4 L610.0,369.5 L633.0,369.5 L633.6,368.3 L634.2,366.9 L634.8,366.8 L635.3,367.5 L635.9,368.7 L636.5,369.5 L641.9,369.5 L642.6,368.0 L642.9,342.0 L643.2,342.0 L644.1,397.5 L644.5,397.5 L645.3,371.0 L648.5,369.5 L648.5,369.5 L649.3,369.0 L650.1,368.3 L651.0,367.5 L651.8,366.6 L652.6,365.7 L653.4,364.8 L654.2,363.8 L655.1,362.7 L655.9,361.6 L656.7,363.2 L657.5,365.1 L658.4,366.9 L659.2,368.4 L660.0,369.5 L683.0,369.5 L683.6,368.3 L684.2,366.9 L684.8,366.8 L685.3,367.5 L685.9,368.7 L686.5,369.5 L691.9,369.5 L692.6,368.0 L692.9,342.0 L693.2,342.0 L694.1,397.5 L694.5,397.5 L695.3,371.0 L698.5,369.5 L698.5,369.5 L699.3,369.0 L700.1,368.3 L701.0,367.5 L701.8,366.6 L702.6,365.7 L703.4,364.8 L704.2,363.8 L705.1,362.7 L705.9,361.6 L706.7,363.2 L707.5,365.1 L708.4,366.9 L709.2,368.4 L710.0,369.5 L733.0,369.5 L733.6,368.3 L734.2,366.9 L734.8,366.8 L735.0,369.5 M746.0,369.5 L767.3,369.5 L767.9,368.3 L768.5,366.9 L769.0,366.8 L769.6,367.5 L770.2,368.7 L770.8,369.5 L776.2,369.5 L776.9,368.0 L777.2,342.0 L777.5,342.0 L778.4,397.5 L778.8,397.5 L779.6,371.0 L782.8,369.5 L782.8,369.5 L783.6,369.0 L784.4,368.3 L785.3,367.5 L786.1,366.6 L786.9,365.7 L787.7,364.8 L788.5,363.8 L789.4,362.7 L790.2,361.6 L791.0,363.2 L791.8,365.1 L792.7,366.9 L793.5,368.4 L794.3,369.5 L817.5,369.5 L818.1,368.3 L818.7,366.9 L819.2,366.8 L819.8,367.5 L820.4,368.7 L821.0,369.5 L826.4,369.5 L827.1,368.0 L827.4,342.0 L827.7,342.0 L828.6,397.5 L829.0,397.5 L829.8,371.0 L833.0,369.5 L833.0,369.5 L833.8,369.0 L834.6,368.3 L835.5,367.5 L836.0,369.5" stroke="#a4d4b8" stroke-width="1" fill="none"/><path d="M453.0,425.5 L453.0,425.5 L453.0,425.5 L453.0,425.5 L453.0,425.5 L453.0,425.5 L453.0,425.5 L453.0,425.5 L453.0,425.5 L453.0,425.5 L453.0,425.5 L453.0,425.5 L453.0,425.5 L453.0,425.5 L453.0,425.5 L453.0,425.5 L453.0,425.5 L453.0,425.5 L453.0,425.5 L453.0,425.5 L453.0,425.5 L453.6,419.8 L454.3,418.5 L455.1,417.1 L455.8,415.7 L456.5,416.3 L457.3,418.3 L458.0,420.2 L458.8,422.0 L459.5,423.6 L460.3,425.1 L461.0,426.1 L482.2,425.5 L482.8,424.1 L483.4,422.2 L484.0,420.1 L484.6,417.9 L485.2,419.5 L485.8,421.8 L486.4,423.9 L487.0,425.5 L492.2,425.5 L492.9,363.5 L493.3,363.5 L494.5,427.0 L499.1,426.1 L499.1,426.1 L499.8,425.4 L500.6,424.5 L501.3,423.5 L502.1,422.3 L502.8,421.1 L503.6,419.8 L504.3,418.5 L505.1,417.1 L505.8,415.7 L506.5,416.3 L507.3,418.3 L508.0,420.2 L508.8,422.0 L509.5,423.6 L510.3,425.1 L511.0,426.1 L532.2,425.5 L532.8,424.1 L533.4,422.2 L534.0,420.1 L534.6,417.9 L535.2,419.5 L535.8,421.8 L536.4,423.9 L537.0,425.5 L542.2,425.5 L542.9,363.5 L543.3,363.5 L544.5,427.0 L549.1,426.1 L549.1,426.1 L549.8,425.4 L550.6,424.5 L551.3,423.5 L552.1,422.3 L552.8,421.1 L553.6,419.8 L554.3,418.5 L555.0,417.1 L555.8,415.7 L556.5,416.3 L557.3,418.3 L558.0,420.2 L558.8,422.0 L559.5,423.6 L560.3,425.1 L561.0,426.1 L582.2,425.5 L582.8,424.1 L583.4,422.2 L584.0,420.1 L584.6,417.9 L585.2,419.5 L585.8,421.8 L586.4,423.9 L587.0,425.5 L592.2,425.5 L592.9,363.5 L593.3,363.5 L594.5,427.0 L599.1,426.1 L599.1,426.1 L599.8,425.4 L600.6,424.5 L601.3,423.5 L602.1,422.3 L602.8,421.1 L603.6,419.8 L604.3,418.5 L605.0,417.1 L605.8,415.7 L606.5,416.3 L607.3,418.3 L608.0,420.2 L608.8,422.0 L609.5,423.6 L610.3,425.1 L611.0,426.1 L632.2,425.5 L632.8,424.1 L633.4,422.2 L634.0,420.1 L634.6,417.9 L635.2,419.5 L635.8,421.8 L636.4,423.9 L637.0,425.5 L642.2,425.5 L642.9,363.5 L643.3,363.5 L644.5,427.0 L649.1,426.1 L649.1,426.1 L649.8,425.4 L650.6,424.5 L651.3,423.5 L652.1,422.3 L652.8,421.1 L653.6,419.8 L654.3,418.5 L655.0,417.1 L655.8,415.7 L656.5,416.3 L657.3,418.3 L658.0,420.2 L658.8,422.0 L659.5,423.6 L660.3,425.1 L661.0,426.1 L682.2,425.5 L682.8,424.1 L683.4,422.2 L684.0,420.1 L684.6,417.9 L685.2,419.5 L685.8,421.8 L686.4,423.9 L687.0,425.5 L692.2,425.5 L692.9,363.5 L693.3,363.5 L694.5,427.0 L699.1,426.1 L699.1,426.1 L699.8,425.4 L700.6,424.5 L701.3,423.5 L702.1,422.3 L702.8,421.1 L703.6,419.8 L704.3,418.5 L705.0,417.1 L705.8,415.7 L706.5,416.3 L707.3,418.3 L708.0,420.2 L708.8,422.0 L709.5,423.6 L710.3,425.1 L711.0,426.1 L732.2,425.5 L732.8,424.1 L733.4,422.2 L734.0,420.1 L734.6,417.9 L735.0,425.5 M746.0,425.5 L766.5,425.5 L767.1,424.1 L767.7,422.2 L768.3,420.1 L768.9,417.9 L769.5,419.5 L770.1,421.8 L770.7,423.9 L771.3,425.5 L776.5,425.5 L777.2,363.5 L777.6,363.5 L778.8,427.0 L783.4,426.1 L783.4,426.1 L784.1,425.4 L784.9,424.5 L785.6,423.5 L786.4,422.3 L787.1,421.1 L787.9,419.8 L788.6,418.5 L789.3,417.1 L790.1,415.7 L790.8,416.3 L791.6,418.3 L792.3,420.2 L793.1,422.0 L793.8,423.6 L794.6,425.1 L795.3,426.1 L816.7,425.5 L817.3,424.1 L817.9,422.2 L818.5,420.1 L819.1,417.9 L819.7,419.5 L820.3,421.8 L820.9,423.9 L821.5,425.5 L826.7,425.5 L827.4,363.5 L827.8,363.5 L829.0,427.0 L833.6,426.1 L833.6,426.1 L834.3,425.4 L835.1,424.5 L835.8,423.5 L836.0,425.5" stroke="#a4d4b8" stroke-width="1" fill="none"/><path d="M492.3,194.5 L493.4,182.7 M493.9,182.7 L495.1,194.5 M542.3,194.5 L543.4,182.7 M543.9,182.7 L545.1,194.5 M592.3,194.5 L593.4,182.7 M593.9,182.7 L595.1,194.5 M642.3,194.5 L643.4,182.7 M643.9,182.7 L645.1,194.5 M692.3,194.5 L693.4,182.7 M693.9,182.7 L695.1,194.5 M776.6,194.5 L777.7,182.7 M778.2,182.7 L779.4,194.5 M826.8,194.5 L827.9,182.7 M828.4,182.7 L829.6,194.5 M487.5,231.3 L487.9,239.7 M493.6,228.2 L495.4,236.5 M537.5,231.3 L537.9,239.7 M543.6,228.2 L545.4,236.5 M587.5,231.3 L587.9,239.7 M593.6,228.2 L595.4,236.5 M637.5,231.3 L637.9,239.7 M643.6,228.2 L645.4,236.5 M687.5,231.3 L687.9,239.7 M693.6,228.2 L695.4,236.5 M771.8,231.3 L772.2,239.7 M777.9,228.2 L779.7,236.5 M822.0,231.3 L822.4,239.7 M828.1,228.2 L829.9,236.5 M492.2,260.0 L493.6,250.0 M542.2,260.0 L543.6,250.0 M592.2,260.0 L593.6,250.0 M642.2,260.0 L643.6,250.0 M692.2,260.0 L693.6,250.0 M776.5,260.0 L777.9,250.0 M826.7,260.0 L828.1,250.0 M492.5,313.5 L493.3,293.0 M493.6,293.0 L494.4,315.0 M542.5,313.5 L543.3,293.0 M543.6,293.0 L544.4,315.0 M592.5,313.5 L593.3,293.0 M593.6,293.0 L594.4,315.0 M642.5,313.5 L643.3,293.0 M643.6,293.0 L644.4,315.0 M692.5,313.5 L693.3,293.0 M693.6,293.0 L694.4,315.0 M776.8,313.5 L777.6,293.0 M777.9,293.0 L778.7,315.0 M827.0,313.5 L827.8,293.0 M828.1,293.0 L828.9,315.0 M492.6,368.0 L492.9,342.0 M493.2,342.0 L494.1,397.5 M494.5,397.5 L495.3,371.0 M542.6,368.0 L542.9,342.0 M543.2,342.0 L544.1,397.5 M544.5,397.5 L545.3,371.0 M592.6,368.0 L592.9,342.0 M593.2,342.0 L594.1,397.5 M594.5,397.5 L595.3,371.0 M642.6,368.0 L642.9,342.0 M643.2,342.0 L644.1,397.5 M644.5,397.5 L645.3,371.0 M692.6,368.0 L692.9,342.0 M693.2,342.0 L694.1,397.5 M694.5,397.5 L695.3,371.0 M776.9,368.0 L777.2,342.0 M777.5,342.0 L778.4,397.5 M778.8,397.5 L779.6,371.0 M827.1,368.0 L827.4,342.0 M827.7,342.0 L828.6,397.5 M829.0,397.5 L829.8,371.0 M492.2,425.5 L492.9,363.5 M493.3,363.5 L494.5,427.0 M542.2,425.5 L542.9,363.5 M543.3,363.5 L544.5,427.0 M592.2,425.5 L592.9,363.5 M593.3,363.5 L594.5,427.0 M642.2,425.5 L642.9,363.5 M643.3,363.5 L644.5,427.0 M692.2,425.5 L692.9,363.5 M693.3,363.5 L694.5,427.0 M776.5,425.5 L777.2,363.5 M777.6,363.5 L778.8,427.0 M826.7,425.5 L827.4,363.5 M827.8,363.5 L829.0,427.0" stroke="#78c488" stroke-width="0.9" fill="none"/></svg>
<div class="a" style="left:426px;top:43px;width:411px;height:110px;border:1px solid #a8a494;border-right-color:#fff;border-bottom-color:#fff"><div class="a" style="left:0;top:0;width:409px;height:108px;border:1px solid #fff;border-right-color:#ece9d8;border-bottom-color:#ece9d8"></div></div>
<div class="a cb" style="left:423px;top:155px;width:28px;height:11px;border-color:#5f5b4f;font-size:6.5px;line-height:9px;font-weight:bold;text-align:right;padding-right:1px">60bpm</div>

<div class="a cb" style="left:453px;top:155px;width:94px;height:11px"><div class="a" style="left:1.5px;top:0px;font-size:6.5px;line-height:9px;">Baseline</div><div class="a dd" style="right:0px;top:1px;width:10px;height:8px"><div class="a tri" style="left:2px;top:2px"></div></div></div>
<div class="a cb" style="left:549px;top:155px;width:288px;height:11px"><div class="a" style="left:1.5px;top:0px;font-size:6.5px;line-height:9px;">Therapy modifying QT interval</div><div class="a dd" style="right:0px;top:1px;width:10px;height:8px"><div class="a tri" style="left:2px;top:2px"></div></div></div>
<div class="a cb" style="left:423px;top:190px;width:29px;height:11px"><div class="a" style="left:1.5px;top:0px;font-size:7.2px;line-height:9px;">RV6</div><div class="a dd" style="right:0px;top:1px;width:9px;height:8px"><div class="a tri" style="left:2px;top:2px"></div></div></div>
<div class="a cb" style="left:423px;top:211px;width:29px;height:11px"><div class="a" style="left:1.5px;top:0px;font-size:7.2px;line-height:9px;">RA7</div><div class="a dd" style="right:0px;top:1px;width:9px;height:8px"><div class="a tri" style="left:2px;top:2px"></div></div></div>
<div class="a cb" style="left:423px;top:232px;width:29px;height:11px"><div class="a" style="left:1.5px;top:0px;font-size:7.2px;line-height:9px;">AVN2</div><div class="a dd" style="right:0px;top:1px;width:9px;height:8px"><div class="a tri" style="left:2px;top:2px"></div></div></div>
<div class="a cb" style="left:423px;top:253px;width:29px;height:11px"><div class="a" style="left:1.5px;top:0px;font-size:7.2px;line-height:9px;">IV9</div><div class="a dd" style="right:0px;top:1px;width:9px;height:8px"><div class="a tri" style="left:2px;top:2px"></div></div></div>
<div class="a cb" style="left:423px;top:295px;width:29px;height:11px"><div class="a" style="left:1.5px;top:0px;font-size:7.2px;line-height:9px;">I</div><div class="a dd" style="right:0px;top:1px;width:9px;height:8px"><div class="a tri" style="left:2px;top:2px"></div></div></div>
<div class="a cb" style="left:423px;top:351px;width:29px;height:11px"><div class="a" style="left:1.5px;top:0px;font-size:6.8px;line-height:9px;"><span style="display:inline-block;width:6px;height:5.5px;background:#6e6c5c;vertical-align:middle;margin-top:-1px"></span></div><div class="a dd" style="right:0px;top:1px;width:9px;height:8px"><div class="a tri" style="left:2px;top:2px"></div></div></div>
<div class="a cb" style="left:423px;top:408px;width:29px;height:11px"><div class="a" style="left:1.5px;top:0px;font-size:7.2px;line-height:9px;">V5</div><div class="a dd" style="right:0px;top:1px;width:9px;height:8px"><div class="a tri" style="left:2px;top:2px"></div></div></div>
<div class="a btn" style="left:423px;top:450px;width:29px;height:9px;font-size:6.2px;line-height:8px">Record</div>
<div class="a cb" style="left:423px;top:460px;width:29px;height:9px;border-color:#5f5b4f;font-size:6.8px;line-height:8px;font-weight:bold;padding-left:0.5px">PR=175</div>
<div class="a cb" style="left:423px;top:470px;width:29px;height:9px;border-color:#5f5b4f;font-size:6.8px;line-height:8px;font-weight:bold;padding-left:0.5px">QT=415</div>
<div class="a cb" style="left:423px;top:480px;width:27px;height:11px"><div class="a" style="left:1.5px;top:0px;font-size:7.2px;line-height:9px;">25</div><div class="a dd" style="right:0px;top:1px;width:9px;height:8px"><div class="a tri" style="left:2px;top:2px"></div></div></div>

<div id="status" class="a">
  <div class="a" style="left:1px;top:2.5px;font-size:6.6px;line-height:7px;color:#000;-webkit-text-stroke:0.2px #000">Ready</div>
  <div class="a" style="left:776px;top:1px;width:15px;height:10px;border:1px solid #c8c4b4;border-right-color:#fff;border-bottom-color:#fff"></div>
  <div class="a" style="left:791px;top:1px;width:17px;height:10px;border:1px solid #c8c4b4;border-right-color:#fff;border-bottom-color:#fff;font-size:6px;line-height:8px;font-weight:bold;text-align:center;color:#202020">NUM</div>
  <div class="a" style="left:808px;top:1px;width:19px;height:10px;border:1px solid #c8c4b4;border-right-color:#fff;border-bottom-color:#fff"></div>
  <svg class="a" style="left:827px;top:2px" width="9" height="9"><path d="M8,2 L2,8 M8,5 L5,8" stroke="#a8a494" stroke-width="1"/></svg>

</div>
</body></html>
